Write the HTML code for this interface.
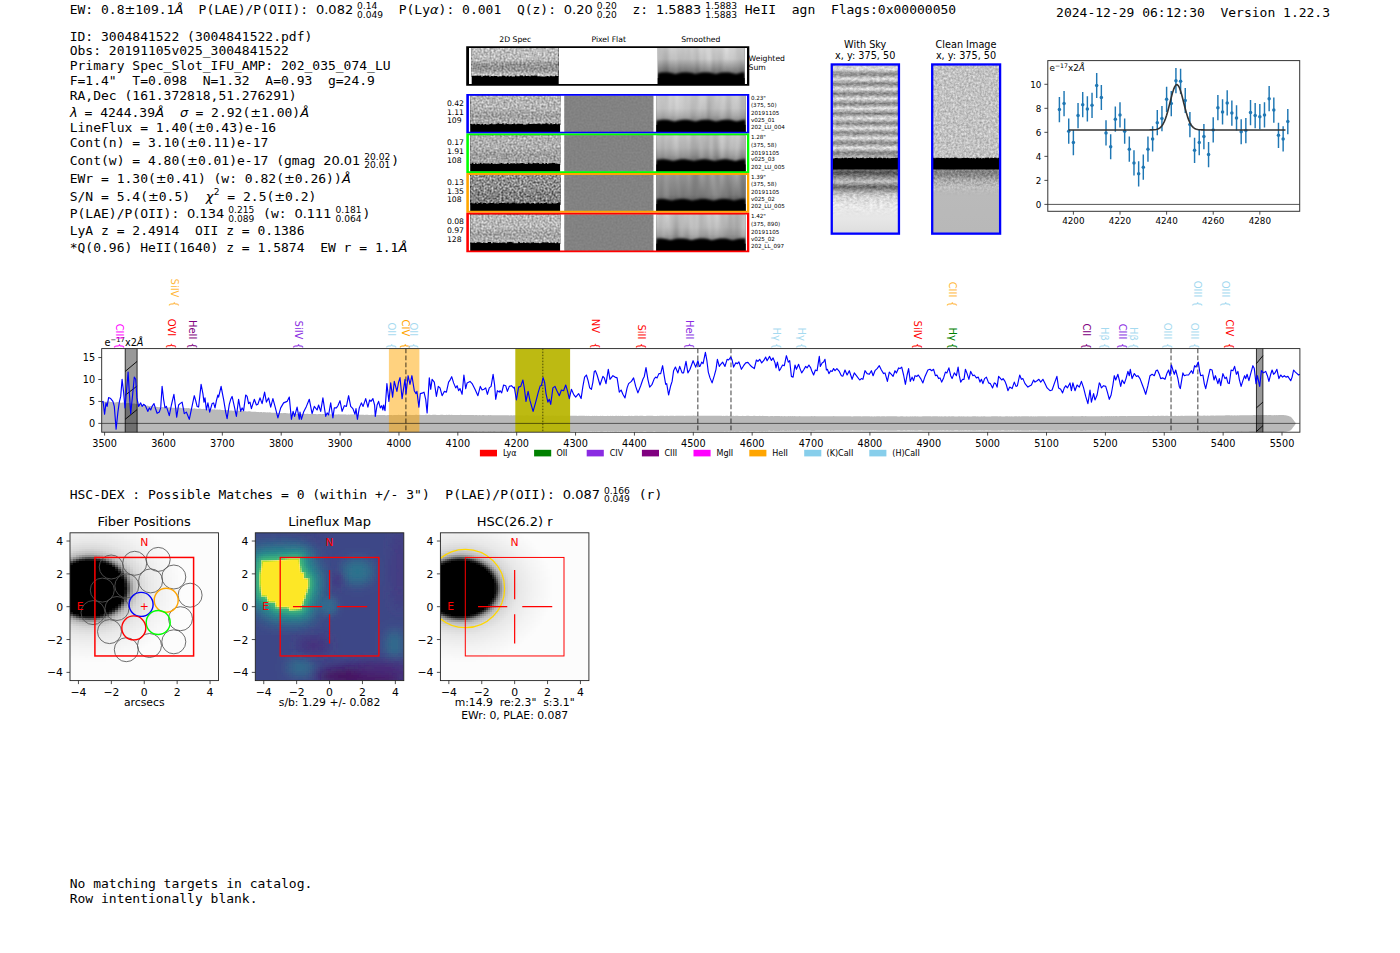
<!DOCTYPE html>
<html><head><meta charset="utf-8"><title>3004841522</title>
<style>
html,body{margin:0;padding:0;background:#fff}
svg{display:block}
text{white-space:pre}
.m{font-family:"DejaVu Sans Mono","Liberation Mono",monospace;font-size:13px}
.s{font-family:"DejaVu Sans","Liberation Sans",sans-serif}
.i{font-style:oblique}
</style></head>
<body>
<svg width="1400" height="953" viewBox="0 0 1400 953">
<text class="m" x="69.70" y="13.90">EW: 0.8</text>
<text class="s" x="124.49" y="13.90" font-size="13">±</text>
<text class="m" x="135.29" y="13.90">109.1</text>
<text class="s i" x="174.62" y="13.90" font-size="13">Å</text>
<text class="m" x="182.92" y="13.90">  P(LAE)/P(OII): </text>
<text class="s" x="315.97" y="13.90" font-size="13">0.082</text>
<text class="s" font-size="9.1" x="357.08" y="9.00">0.14</text><text class="s" font-size="9.1" x="357.08" y="17.50">0.049</text>
<text class="m" x="398.70" y="13.90">P(Ly</text>
<text class="s i" x="430.01" y="13.90" font-size="13">α</text>
<text class="m" x="438.61" y="13.90">): 0.001  Q(z): </text>
<text class="s" x="563.83" y="13.90" font-size="13">0.20</text>
<text class="s" font-size="9.1" x="596.67" y="9.00">0.20</text><text class="s" font-size="9.1" x="596.67" y="17.50">0.20</text>
<text class="m" x="632.40" y="13.90">z: </text>
<text class="s" x="655.88" y="13.90" font-size="13">1.5883</text>
<text class="s" font-size="9.1" x="705.25" y="9.00">1.5883</text><text class="s" font-size="9.1" x="705.25" y="17.50">1.5883</text>
<text class="m" x="744.80" y="13.90">HeII  agn  Flags:0x00000050</text>
<text class="m" x="1056.10" y="17.00">2024-12-29 06:12:30  Version 1.22.3</text>
<text class="m" x="69.70" y="40.80">ID: 3004841522 (3004841522.pdf)</text>
<text class="m" x="69.70" y="54.90">Obs: 20191105v025_3004841522</text>
<text class="m" x="69.70" y="69.60">Primary Spec_Slot_IFU_AMP: 202_035_074_LU</text>
<text class="m" x="69.70" y="85.10">F=1.4"  T=0.098  N=1.32  A=0.93  g=24.9</text>
<text class="m" x="69.70" y="99.90">RA,Dec (161.372818,51.276291)</text>
<text class="s i" x="70.10" y="117.10" font-size="13">λ</text>
<text class="m" x="76.70" y="117.10"> = 4244.39</text>
<text class="s i" x="155.17" y="117.10" font-size="13">Å</text>
<text class="m" x="163.47" y="117.10">  </text>
<text class="s i" x="180.00" y="117.10" font-size="13">σ</text>
<text class="m" x="187.60" y="117.10"> = 2.92(</text>
<text class="s" x="250.21" y="117.10" font-size="13">±</text>
<text class="m" x="261.01" y="117.10">1.00)</text>
<text class="s i" x="300.35" y="117.10" font-size="13">Å</text>
<text class="m" x="69.70" y="132.30">LineFlux = 1.40(</text>
<text class="s" x="194.93" y="132.30" font-size="13">±</text>
<text class="m" x="205.73" y="132.30">0.43)e-16</text>
<text class="m" x="69.70" y="147.00">Cont(n) = 3.10(</text>
<text class="s" x="187.10" y="147.00" font-size="13">±</text>
<text class="m" x="197.90" y="147.00">0.11)e-17</text>
<text class="m" x="69.70" y="164.60">Cont(w) = 4.80(</text>
<text class="s" x="187.10" y="164.60" font-size="13">±</text>
<text class="m" x="197.90" y="164.60">0.01)e-17 (gmag </text>
<text class="s" x="323.13" y="164.60" font-size="13">20.01</text>
<text class="s" font-size="9.1" x="364.23" y="159.70">20.02</text><text class="s" font-size="9.1" x="364.23" y="168.20">20.01</text>
<text class="m" x="391.28" y="164.60">)</text>
<text class="m" x="69.70" y="183.00">EWr = 1.30(</text>
<text class="s" x="155.79" y="183.00" font-size="13">±</text>
<text class="m" x="166.59" y="183.00">0.41) (w: 0.82(</text>
<text class="s" x="283.99" y="183.00" font-size="13">±</text>
<text class="m" x="294.79" y="183.00">0.26))</text>
<text class="s i" x="341.95" y="183.00" font-size="13">Å</text>
<text class="m" x="69.70" y="200.50">S/N = 5.4(</text>
<text class="s" x="147.97" y="200.50" font-size="13">±</text>
<text class="m" x="158.77" y="200.50">0.5)  </text>
<text class="s i" x="205.73" y="200.50" font-size="13">χ</text>
<text class="s" x="213.73" y="195.30" font-size="9.1">2</text>
<text class="m" x="219.51" y="200.50"> = 2.5(</text>
<text class="s" x="274.30" y="200.50" font-size="13">±</text>
<text class="m" x="285.10" y="200.50">0.2)</text>
<text class="m" x="69.70" y="218.10">P(LAE)/P(OII): </text>
<text class="s" x="187.10" y="218.10" font-size="13">0.134</text>
<text class="s" font-size="9.1" x="228.21" y="213.20">0.215</text><text class="s" font-size="9.1" x="228.21" y="221.70">0.089</text>
<text class="m" x="255.25" y="218.10"> (w: </text>
<text class="s" x="294.38" y="218.10" font-size="13">0.111</text>
<text class="s" font-size="9.1" x="335.49" y="213.20">0.181</text><text class="s" font-size="9.1" x="335.49" y="221.70">0.064</text>
<text class="m" x="362.53" y="218.10">)</text>
<text class="m" x="69.70" y="234.70">LyA z = 2.4914  OII z = 0.1386</text>
<text class="m" x="69.70" y="251.80">*Q(0.96) HeII(1640) z = 1.5874  EW r = 1.1</text>
<text class="s i" x="398.62" y="251.80" font-size="13">Å</text>
<text class="m" x="69.70" y="498.60">HSC-DEX : Possible Matches = 0 (within +/- 3")  P(LAE)/P(OII): </text>
<text class="s" x="562.78" y="498.60" font-size="13">0.087</text>
<text class="s" font-size="9.1" x="603.88" y="493.70">0.166</text><text class="s" font-size="9.1" x="603.88" y="502.20">0.049</text>
<text class="m" x="630.93" y="498.60"> (r)</text>
<text class="m" x="69.70" y="888.20">No matching targets in catalog.</text>
<text class="m" x="69.70" y="903.20">Row intentionally blank.</text>
<defs>
<filter id="nzA" x="0" y="0" width="1" height="1" color-interpolation-filters="sRGB"><feTurbulence type="fractalNoise" baseFrequency="0.5 0.5" numOctaves="2" seed="3" result="t"/><feColorMatrix in="t" type="matrix" values="1 0 0 0 0 1 0 0 0 0 1 0 0 0 0 0 0 0 0 1" result="g0"/><feGaussianBlur in="g0" stdDeviation="0.4" result="g"/><feComposite in="SourceGraphic" in2="g" operator="arithmetic" k1="0" k2="1" k3="0.62" k4="-0.310"/></filter>
<filter id="nzB" x="0" y="0" width="1" height="1" color-interpolation-filters="sRGB"><feTurbulence type="fractalNoise" baseFrequency="0.5 0.5" numOctaves="2" seed="8" result="t"/><feColorMatrix in="t" type="matrix" values="1 0 0 0 0 1 0 0 0 0 1 0 0 0 0 0 0 0 0 1" result="g0"/><feGaussianBlur in="g0" stdDeviation="0.4" result="g"/><feComposite in="SourceGraphic" in2="g" operator="arithmetic" k1="0" k2="1" k3="0.95" k4="-0.475"/></filter>
<filter id="nzC" x="0" y="0" width="1" height="1" color-interpolation-filters="sRGB"><feTurbulence type="fractalNoise" baseFrequency="0.5 0.5" numOctaves="1" seed="5" result="t"/><feColorMatrix in="t" type="matrix" values="1 0 0 0 0 1 0 0 0 0 1 0 0 0 0 0 0 0 0 1" result="g"/><feComposite in="SourceGraphic" in2="g" operator="arithmetic" k1="0" k2="1" k3="0.08" k4="-0.040"/></filter>
<filter id="nzV" x="0" y="0" width="1" height="1" color-interpolation-filters="sRGB"><feTurbulence type="fractalNoise" baseFrequency="0.1 0.012" numOctaves="2" seed="21" result="t"/><feColorMatrix in="t" type="matrix" values="1 0 0 0 0 1 0 0 0 0 1 0 0 0 0 0 0 0 0 1" result="g"/><feComposite in="SourceGraphic" in2="g" operator="arithmetic" k1="0" k2="1" k3="0.28" k4="-0.140"/></filter>
<filter id="nzS" x="0" y="0" width="1" height="1" color-interpolation-filters="sRGB"><feTurbulence type="fractalNoise" baseFrequency="0.3 0.45" numOctaves="2" seed="11" result="t"/><feColorMatrix in="t" type="matrix" values="1 0 0 0 0 1 0 0 0 0 1 0 0 0 0 0 0 0 0 1" result="g0"/><feGaussianBlur in="g0" stdDeviation="0.4" result="g"/><feComposite in="SourceGraphic" in2="g" operator="arithmetic" k1="0" k2="1" k3="0.36" k4="-0.180"/></filter>
<filter id="nzK" x="0" y="0" width="1" height="1" color-interpolation-filters="sRGB"><feTurbulence type="fractalNoise" baseFrequency="0.45 0.45" numOctaves="2" seed="17" result="t"/><feColorMatrix in="t" type="matrix" values="1 0 0 0 0 1 0 0 0 0 1 0 0 0 0 0 0 0 0 1" result="g0"/><feGaussianBlur in="g0" stdDeviation="0.4" result="g"/><feComposite in="SourceGraphic" in2="g" operator="arithmetic" k1="0" k2="1" k3="0.4" k4="-0.200"/></filter>
<filter id="blurw" x="-0.05" y="-0.5" width="1.1" height="2"><feGaussianBlur stdDeviation="1.0 1.3"/></filter>
<linearGradient id="g2d0" x1="0" y1="0" x2="0" y2="1"><stop offset="0" stop-color="#bebebe"/><stop offset="0.4" stop-color="#bababa"/><stop offset="0.58" stop-color="#929292"/><stop offset="0.78" stop-color="#969696"/><stop offset="0.92" stop-color="#c4c4c4"/><stop offset="1" stop-color="#c8c8c8"/></linearGradient>
<linearGradient id="g2d1" x1="0" y1="0" x2="0" y2="1"><stop offset="0" stop-color="#b6b6b6"/><stop offset="0.45" stop-color="#b4b4b4"/><stop offset="0.68" stop-color="#9e9e9e"/><stop offset="0.85" stop-color="#acacac"/><stop offset="1" stop-color="#b0b0b0"/></linearGradient>
<linearGradient id="g2d2" x1="0" y1="0" x2="0" y2="1"><stop offset="0" stop-color="#b0b0b0"/><stop offset="0.45" stop-color="#aeaeae"/><stop offset="0.68" stop-color="#9c9c9c"/><stop offset="0.85" stop-color="#a6a6a6"/><stop offset="1" stop-color="#a8a8a8"/></linearGradient>
<linearGradient id="g2d3" x1="0" y1="0" x2="0" y2="1"><stop offset="0" stop-color="#929292"/><stop offset="0.45" stop-color="#8e8e8e"/><stop offset="0.68" stop-color="#808080"/><stop offset="0.85" stop-color="#848484"/><stop offset="1" stop-color="#868686"/></linearGradient>
<linearGradient id="g2d4" x1="0" y1="0" x2="0" y2="1"><stop offset="0" stop-color="#bababa"/><stop offset="0.45" stop-color="#b6b6b6"/><stop offset="0.68" stop-color="#a2a2a2"/><stop offset="0.85" stop-color="#aeaeae"/><stop offset="1" stop-color="#b2b2b2"/></linearGradient>
<linearGradient id="gsm0" x1="0" y1="0" x2="0" y2="1"><stop offset="0" stop-color="#cecece"/><stop offset="0.3" stop-color="#c4c4c4"/><stop offset="0.52" stop-color="#969696"/><stop offset="0.66" stop-color="#767676"/><stop offset="0.78" stop-color="#505050"/><stop offset="1" stop-color="#3c3c3c"/></linearGradient>
<linearGradient id="gsm1" x1="0" y1="0" x2="0" y2="1"><stop offset="0" stop-color="#c4c4c4"/><stop offset="0.35" stop-color="#b8b8b8"/><stop offset="0.55" stop-color="#9e9e9e"/><stop offset="0.7" stop-color="#7d7d7d"/><stop offset="0.8" stop-color="#5a5a5a"/><stop offset="1" stop-color="#464646"/></linearGradient>
<linearGradient id="gsm2" x1="0" y1="0" x2="0" y2="1"><stop offset="0" stop-color="#bababa"/><stop offset="0.35" stop-color="#acacac"/><stop offset="0.55" stop-color="#949494"/><stop offset="0.7" stop-color="#767676"/><stop offset="0.8" stop-color="#555555"/><stop offset="1" stop-color="#464646"/></linearGradient>
<linearGradient id="gsm3" x1="0" y1="0" x2="0" y2="1"><stop offset="0" stop-color="#989898"/><stop offset="0.35" stop-color="#8a8a8a"/><stop offset="0.55" stop-color="#808080"/><stop offset="0.7" stop-color="#646464"/><stop offset="0.8" stop-color="#4b4b4b"/><stop offset="1" stop-color="#3c3c3c"/></linearGradient>
<linearGradient id="gsm4" x1="0" y1="0" x2="0" y2="1"><stop offset="0" stop-color="#c4c4c4"/><stop offset="0.35" stop-color="#b6b6b6"/><stop offset="0.55" stop-color="#a0a0a0"/><stop offset="0.7" stop-color="#808080"/><stop offset="0.8" stop-color="#5a5a5a"/><stop offset="1" stop-color="#464646"/></linearGradient>
<linearGradient id="gsky" x1="0" y1="0" x2="0" y2="1"><stop offset="0" stop-color="#c4c4c4"/><stop offset="0.045" stop-color="#e0e0e0"/><stop offset="0.0976" stop-color="#828282"/><stop offset="0.1502" stop-color="#e0e0e0"/><stop offset="0.2028" stop-color="#828282"/><stop offset="0.2554" stop-color="#e0e0e0"/><stop offset="0.308" stop-color="#828282"/><stop offset="0.3606" stop-color="#e0e0e0"/><stop offset="0.4132" stop-color="#828282"/><stop offset="0.4658" stop-color="#e0e0e0"/><stop offset="0.5184" stop-color="#828282"/><stop offset="0.571" stop-color="#e0e0e0"/><stop offset="0.6236" stop-color="#828282"/><stop offset="0.6762" stop-color="#e0e0e0"/><stop offset="0.7289" stop-color="#828282"/><stop offset="0.7815" stop-color="#e0e0e0"/><stop offset="0.8341" stop-color="#828282"/><stop offset="0.8867" stop-color="#e0e0e0"/><stop offset="0.9393" stop-color="#828282"/><stop offset="1" stop-color="#bebebe"/></linearGradient>
<linearGradient id="gsky2" x1="0" y1="0" x2="0" y2="1"><stop offset="0" stop-color="#787878"/><stop offset="0.06" stop-color="#525252"/><stop offset="0.14" stop-color="#969696"/><stop offset="0.2" stop-color="#c0c0c0"/><stop offset="0.28" stop-color="#646464"/><stop offset="0.36" stop-color="#afafaf"/><stop offset="0.45" stop-color="#d8d8d8"/><stop offset="0.6" stop-color="#e8e8e8"/><stop offset="0.8" stop-color="#e6e6e6"/><stop offset="1" stop-color="#dedede"/></linearGradient>
<linearGradient id="gcl2" x1="0" y1="0" x2="0" y2="1"><stop offset="0" stop-color="#8a8a8a"/><stop offset="0.08" stop-color="#808080"/><stop offset="0.18" stop-color="#acacac"/><stop offset="0.3" stop-color="#bebebe"/><stop offset="0.36" stop-color="#bababa"/><stop offset="1" stop-color="#b8b8b8"/></linearGradient>
<linearGradient id="gfade" x1="0" y1="0" x2="0" y2="1"><stop offset="0" stop-color="#fff"/><stop offset="0.45" stop-color="#fff"/><stop offset="0.75" stop-color="#000"/><stop offset="1" stop-color="#000"/></linearGradient>
<mask id="mfs"><rect x="832" y="169" width="67" height="64" fill="url(#gfade)"/></mask>
<linearGradient id="gfade2" x1="0" y1="0" x2="0" y2="1"><stop offset="0" stop-color="#fff"/><stop offset="0.2" stop-color="#fff"/><stop offset="0.42" stop-color="#000"/><stop offset="1" stop-color="#000"/></linearGradient>
<mask id="mfc"><rect x="933" y="169" width="67" height="64" fill="url(#gfade2)"/></mask>
</defs>
<text class="s" x="515.30" y="41.90" font-size="7.7" text-anchor="middle">2D Spec</text>
<text class="s" x="608.70" y="41.90" font-size="7.7" text-anchor="middle">Pixel Flat</text>
<text class="s" x="700.80" y="41.90" font-size="7.7" text-anchor="middle">Smoothed</text>
<rect x="471.70" y="48.00" width="87.00" height="29.00" fill="url(#g2d0)" filter="url(#nzA)"/>
<polygon points="471.7,75.85 473.3,75.85 473.3,75.71 474.9,75.71 474.9,75.65 476.5,75.65 476.5,75.47 478.1,75.47 478.1,75.71 479.7,75.71 479.7,75.49 481.3,75.49 481.3,76.57 482.9,76.57 482.9,76.04 484.5,76.04 484.5,75.47 486.1,75.47 486.1,75.82 487.7,75.82 487.7,75.52 489.3,75.52 489.3,76.46 490.9,76.46 490.9,76.04 492.5,76.04 492.5,76.30 494.1,76.30 494.1,75.95 495.7,75.95 495.7,75.91 497.3,75.91 497.3,76.58 498.9,76.58 498.9,76.34 500.5,76.34 500.5,76.26 502.1,76.26 502.1,75.50 503.7,75.50 503.7,75.68 505.3,75.68 505.3,76.41 506.9,76.41 506.9,75.64 508.5,75.64 508.5,76.43 510.1,76.43 510.1,75.86 511.7,75.86 511.7,76.45 513.3,76.45 513.3,76.60 514.9,76.60 514.9,75.55 516.5,75.55 516.5,76.35 518.1,76.35 518.1,76.34 519.7,76.34 519.7,75.42 521.3,75.42 521.3,75.55 522.9,75.55 522.9,76.25 524.5,76.25 524.5,75.45 526.1,75.45 526.1,75.95 527.7,75.95 527.7,75.79 529.3,75.79 529.3,76.35 530.9,76.35 530.9,75.47 532.5,75.47 532.5,75.77 534.1,75.77 534.1,75.44 535.7,75.44 535.7,75.53 537.3,75.53 537.3,76.24 538.9,76.24 538.9,76.17 540.5,76.17 540.5,76.40 542.1,76.40 542.1,76.43 543.7,76.43 543.7,76.52 545.3,76.52 545.3,76.24 546.9,76.24 546.9,75.88 548.5,75.88 548.5,76.60 550.1,76.60 550.1,75.79 551.7,75.79 551.7,76.19 553.3,76.19 553.3,76.23 554.9,76.23 554.9,75.62 556.5,75.62 556.5,76.02 558.1,76.02 558.1,76.22 558.7,76.22 558.7,84.20 471.7,84.20" fill="#000"/>
<rect x="657.80" y="48.00" width="86.80" height="36.20" fill="url(#gsm0)" filter="url(#nzV)"/>
<clipPath id="cst"><rect x="657.8" y="48" width="86.8" height="36.2"/></clipPath>
<g clip-path="url(#cst)"><g filter="url(#blurw)"><polygon points="657.8,73.50 659.2,73.15 660.7,72.85 662.1,72.62 663.6,72.47 665.0,72.40 666.5,72.43 667.9,72.55 669.4,72.75 670.8,73.02 672.3,73.35 673.7,73.73 675.2,74.13 676.6,73.87 678.1,73.48 679.5,73.13 680.9,72.83 682.4,72.61 683.8,72.46 685.3,72.40 686.7,72.43 688.2,72.55 689.6,72.76 691.1,73.03 692.5,73.37 694.0,73.75 695.4,74.15 696.9,73.85 698.3,73.46 699.8,73.12 701.2,72.82 702.6,72.60 704.1,72.46 705.5,72.40 707.0,72.44 708.4,72.56 709.9,72.77 711.3,73.05 712.8,73.39 714.2,73.77 715.7,74.17 717.1,73.83 718.6,73.45 720.0,73.10 721.5,72.81 722.9,72.59 724.3,72.45 725.8,72.40 727.2,72.44 728.7,72.57 730.1,72.78 731.6,73.06 733.0,73.40 734.5,73.78 735.9,74.18 737.4,73.81 738.8,73.43 740.3,73.09 741.7,72.80 743.2,72.58 744.6,72.45 744.6,88.00 657.8,88.00" fill="#000"/></g></g>
<rect x="657.80" y="78.00" width="86.80" height="6.20" fill="#000"/>
<path d="M466.20 46.20H749.30V85.80H466.20ZM469.00 48.00V84.00H747.00V48.00Z" fill="#000" fill-rule="evenodd"/>
<text class="s" x="748.60" y="60.70" font-size="7.7" text-anchor="start">Weighted</text>
<text class="s" x="748.60" y="69.70" font-size="7.7" text-anchor="start">Sum</text>
<rect x="470.20" y="95.50" width="89.90" height="29.50" fill="url(#g2d1)" filter="url(#nzA)"/>
<polygon points="470.2,124.08 471.8,124.08 471.8,124.30 473.4,124.30 473.4,123.65 475.0,123.65 475.0,124.41 476.6,124.41 476.6,123.80 478.2,123.80 478.2,124.02 479.8,124.02 479.8,124.42 481.4,124.42 481.4,123.84 483.0,123.84 483.0,124.45 484.6,124.45 484.6,123.94 486.2,123.94 486.2,124.41 487.8,124.41 487.8,124.38 489.4,124.38 489.4,123.95 491.0,123.95 491.0,123.43 492.6,123.43 492.6,124.34 494.2,124.34 494.2,124.21 495.8,124.21 495.8,123.68 497.4,123.68 497.4,123.27 499.0,123.27 499.0,123.75 500.6,123.75 500.6,123.98 502.2,123.98 502.2,123.23 503.8,123.23 503.8,124.44 505.4,124.44 505.4,123.38 507.0,123.38 507.0,124.12 508.6,124.12 508.6,124.31 510.2,124.31 510.2,124.35 511.8,124.35 511.8,124.10 513.4,124.10 513.4,123.44 515.0,123.44 515.0,124.27 516.6,124.27 516.6,123.74 518.2,123.74 518.2,123.67 519.8,123.67 519.8,124.02 521.4,124.02 521.4,123.79 523.0,123.79 523.0,124.42 524.6,124.42 524.6,124.42 526.2,124.42 526.2,124.23 527.8,124.23 527.8,123.62 529.4,123.62 529.4,123.94 531.0,123.94 531.0,124.09 532.6,124.09 532.6,123.74 534.2,123.74 534.2,123.91 535.8,123.91 535.8,124.11 537.4,124.11 537.4,123.47 539.0,123.47 539.0,123.59 540.6,123.59 540.6,124.18 542.2,124.18 542.2,123.75 543.8,123.75 543.8,123.82 545.4,123.82 545.4,123.36 547.0,123.36 547.0,123.55 548.6,123.55 548.6,124.13 550.2,124.13 550.2,123.23 551.8,123.23 551.8,124.35 553.4,124.35 553.4,123.96 555.0,123.96 555.0,123.52 556.6,123.52 556.6,124.30 558.2,124.30 558.2,123.86 559.8,123.86 559.8,124.45 560.1,124.45 560.1,132.10 470.2,132.10" fill="#000"/>
<rect x="564.30" y="95.50" width="89.10" height="36.60" fill="#828282" filter="url(#nzC)"/>
<rect x="656.30" y="95.50" width="89.30" height="36.60" fill="url(#gsm1)" filter="url(#nzV)"/>
<clipPath id="cs0"><rect x="656.3" y="95.50" width="89.3" height="36.60"/></clipPath>
<g clip-path="url(#cs0)"><g filter="url(#blurw)"><polygon points="656.3,120.80 657.8,120.45 659.3,120.15 660.8,119.92 662.3,119.77 663.7,119.70 665.2,119.73 666.7,119.85 668.2,120.05 669.7,120.32 671.2,120.65 672.7,121.03 674.2,121.43 675.6,121.17 677.1,120.78 678.6,120.43 680.1,120.13 681.6,119.91 683.1,119.76 684.6,119.70 686.1,119.73 687.6,119.85 689.0,120.06 690.5,120.33 692.0,120.67 693.5,121.05 695.0,121.45 696.5,121.15 698.0,120.76 699.5,120.42 700.9,120.12 702.4,119.90 703.9,119.76 705.4,119.70 706.9,119.74 708.4,119.86 709.9,120.07 711.4,120.35 712.9,120.69 714.3,121.07 715.8,121.47 717.3,121.13 718.8,120.75 720.3,120.40 721.8,120.11 723.3,119.89 724.8,119.75 726.3,119.70 727.7,119.74 729.2,119.87 730.7,120.08 732.2,120.36 733.7,120.70 735.2,121.08 736.7,121.48 738.2,121.11 739.6,120.73 741.1,120.39 742.6,120.10 744.1,119.88 745.6,119.75 745.6,136.10 656.3,136.10" fill="#000"/></g></g>
<rect x="656.30" y="124.90" width="89.30" height="7.20" fill="#000"/>
<path d="M466.30 93.90H749.30V133.50H466.30ZM468.90 95.75V131.65H747.00V95.75Z" fill="#0000ff" fill-rule="evenodd"/>
<text class="s" x="446.90" y="105.60" font-size="7.7" text-anchor="start">0.42</text>
<text class="s" x="446.90" y="114.50" font-size="7.7" text-anchor="start">1.11</text>
<text class="s" x="446.90" y="123.00" font-size="7.7" text-anchor="start">109</text>
<text class="s" x="750.90" y="99.50" font-size="5.6" text-anchor="start">0.23"</text>
<text class="s" x="750.90" y="107.10" font-size="5.6" text-anchor="start">(375, 50)</text>
<text class="s" x="750.90" y="115.00" font-size="5.6" text-anchor="start">20191105</text>
<text class="s" x="750.90" y="121.70" font-size="5.6" text-anchor="start">v025_01</text>
<text class="s" x="750.90" y="129.00" font-size="5.6" text-anchor="start">202_LU_004</text>
<rect x="470.20" y="135.10" width="89.90" height="29.50" fill="url(#g2d2)" filter="url(#nzA)"/>
<polygon points="470.2,163.81 471.8,163.81 471.8,162.85 473.4,162.85 473.4,163.94 475.0,163.94 475.0,163.18 476.6,163.18 476.6,163.99 478.2,163.99 478.2,163.78 479.8,163.78 479.8,162.80 481.4,162.80 481.4,163.83 483.0,163.83 483.0,163.27 484.6,163.27 484.6,163.50 486.2,163.50 486.2,163.51 487.8,163.51 487.8,163.46 489.4,163.46 489.4,163.85 491.0,163.85 491.0,163.02 492.6,163.02 492.6,163.98 494.2,163.98 494.2,163.80 495.8,163.80 495.8,164.07 497.4,164.07 497.4,163.75 499.0,163.75 499.0,163.57 500.6,163.57 500.6,162.93 502.2,162.93 502.2,163.61 503.8,163.61 503.8,163.95 505.4,163.95 505.4,163.76 507.0,163.76 507.0,162.81 508.6,162.81 508.6,164.02 510.2,164.02 510.2,163.29 511.8,163.29 511.8,163.61 513.4,163.61 513.4,163.24 515.0,163.24 515.0,163.66 516.6,163.66 516.6,163.20 518.2,163.20 518.2,163.45 519.8,163.45 519.8,163.26 521.4,163.26 521.4,162.93 523.0,162.93 523.0,163.34 524.6,163.34 524.6,163.92 526.2,163.92 526.2,164.02 527.8,164.02 527.8,162.87 529.4,162.87 529.4,163.46 531.0,163.46 531.0,163.85 532.6,163.85 532.6,162.87 534.2,162.87 534.2,163.35 535.8,163.35 535.8,163.15 537.4,163.15 537.4,162.95 539.0,162.95 539.0,163.73 540.6,163.73 540.6,163.64 542.2,163.64 542.2,162.96 543.8,162.96 543.8,163.92 545.4,163.92 545.4,163.11 547.0,163.11 547.0,163.97 548.6,163.97 548.6,163.20 550.2,163.20 550.2,163.19 551.8,163.19 551.8,162.87 553.4,162.87 553.4,163.00 555.0,163.00 555.0,163.45 556.6,163.45 556.6,163.84 558.2,163.84 558.2,163.90 559.8,163.90 559.8,163.41 560.1,163.41 560.1,171.70 470.2,171.70" fill="#000"/>
<rect x="564.30" y="135.10" width="89.10" height="36.60" fill="#828282" filter="url(#nzC)"/>
<rect x="656.30" y="135.10" width="89.30" height="36.60" fill="url(#gsm2)" filter="url(#nzV)"/>
<clipPath id="cs1"><rect x="656.3" y="135.10" width="89.3" height="36.60"/></clipPath>
<g clip-path="url(#cs1)"><g filter="url(#blurw)"><polygon points="656.3,160.08 657.8,159.78 659.3,159.54 660.8,159.38 662.3,159.30 663.7,159.32 665.2,159.43 666.7,159.62 668.2,159.89 669.7,160.21 671.2,160.59 672.7,160.98 674.2,160.81 675.6,160.42 677.1,160.07 678.6,159.76 680.1,159.53 681.6,159.37 683.1,159.30 684.6,159.32 686.1,159.44 687.6,159.63 689.0,159.90 690.5,160.23 692.0,160.60 693.5,161.00 695.0,160.79 696.5,160.41 698.0,160.05 699.5,159.75 700.9,159.52 702.4,159.37 703.9,159.30 705.4,159.33 706.9,159.44 708.4,159.64 709.9,159.91 711.4,160.25 712.9,160.62 714.3,161.02 715.8,160.78 717.3,160.39 718.8,160.04 720.3,159.74 721.8,159.51 723.3,159.36 724.8,159.30 726.3,159.33 727.7,159.45 729.2,159.65 730.7,159.93 732.2,160.26 733.7,160.64 735.2,161.04 736.7,160.76 738.2,160.37 739.6,160.02 741.1,159.73 742.6,159.50 744.1,159.36 745.6,159.30 745.6,175.70 656.3,175.70" fill="#000"/></g></g>
<rect x="656.30" y="164.50" width="89.30" height="7.20" fill="#000"/>
<path d="M466.30 133.50H749.30V173.10H466.30ZM468.90 135.35V171.25H747.00V135.35Z" fill="#00ff00" fill-rule="evenodd"/>
<text class="s" x="446.90" y="145.20" font-size="7.7" text-anchor="start">0.17</text>
<text class="s" x="446.90" y="154.10" font-size="7.7" text-anchor="start">1.91</text>
<text class="s" x="446.90" y="162.60" font-size="7.7" text-anchor="start">108</text>
<text class="s" x="750.90" y="139.10" font-size="5.6" text-anchor="start">1.28"</text>
<text class="s" x="750.90" y="146.70" font-size="5.6" text-anchor="start">(375, 58)</text>
<text class="s" x="750.90" y="154.60" font-size="5.6" text-anchor="start">20191105</text>
<text class="s" x="750.90" y="161.30" font-size="5.6" text-anchor="start">v025_03</text>
<text class="s" x="750.90" y="168.60" font-size="5.6" text-anchor="start">202_LU_005</text>
<rect x="470.20" y="174.70" width="89.90" height="29.50" fill="url(#g2d3)" filter="url(#nzB)"/>
<polygon points="470.2,203.10 471.8,203.10 471.8,203.21 473.4,203.21 473.4,203.52 475.0,203.52 475.0,202.57 476.6,202.57 476.6,203.69 478.2,203.69 478.2,203.05 479.8,203.05 479.8,202.53 481.4,202.53 481.4,203.59 483.0,203.59 483.0,202.98 484.6,202.98 484.6,202.90 486.2,202.90 486.2,203.65 487.8,203.65 487.8,203.21 489.4,203.21 489.4,202.79 491.0,202.79 491.0,203.11 492.6,203.11 492.6,202.76 494.2,202.76 494.2,203.50 495.8,203.50 495.8,203.39 497.4,203.39 497.4,203.56 499.0,203.56 499.0,203.04 500.6,203.04 500.6,202.50 502.2,202.50 502.2,202.93 503.8,202.93 503.8,202.69 505.4,202.69 505.4,203.20 507.0,203.20 507.0,202.73 508.6,202.73 508.6,203.57 510.2,203.57 510.2,203.32 511.8,203.32 511.8,202.82 513.4,202.82 513.4,202.76 515.0,202.76 515.0,203.15 516.6,203.15 516.6,203.59 518.2,203.59 518.2,203.35 519.8,203.35 519.8,203.43 521.4,203.43 521.4,203.33 523.0,203.33 523.0,202.65 524.6,202.65 524.6,203.44 526.2,203.44 526.2,202.55 527.8,202.55 527.8,202.56 529.4,202.56 529.4,203.63 531.0,203.63 531.0,203.21 532.6,203.21 532.6,203.06 534.2,203.06 534.2,203.67 535.8,203.67 535.8,203.15 537.4,203.15 537.4,202.52 539.0,202.52 539.0,203.55 540.6,203.55 540.6,202.92 542.2,202.92 542.2,203.54 543.8,203.54 543.8,202.95 545.4,202.95 545.4,202.54 547.0,202.54 547.0,203.44 548.6,203.44 548.6,203.69 550.2,203.69 550.2,203.59 551.8,203.59 551.8,203.00 553.4,203.00 553.4,203.68 555.0,203.68 555.0,203.59 556.6,203.59 556.6,203.05 558.2,203.05 558.2,202.50 559.8,202.50 559.8,203.15 560.1,203.15 560.1,211.30 470.2,211.30" fill="#000"/>
<rect x="564.30" y="174.70" width="89.10" height="36.60" fill="#828282" filter="url(#nzC)"/>
<rect x="656.30" y="174.70" width="89.30" height="36.60" fill="url(#gsm3)" filter="url(#nzV)"/>
<clipPath id="cs2"><rect x="656.3" y="174.70" width="89.3" height="36.60"/></clipPath>
<g clip-path="url(#cs2)"><g filter="url(#blurw)"><polygon points="656.3,199.41 657.8,199.16 659.3,198.99 660.8,198.91 662.3,198.92 663.7,199.01 665.2,199.19 666.7,199.45 668.2,199.77 669.7,200.14 671.2,200.54 672.7,200.46 674.2,200.07 675.6,199.71 677.1,199.40 678.6,199.15 680.1,198.99 681.6,198.91 683.1,198.92 684.6,199.02 686.1,199.20 687.6,199.47 689.0,199.79 690.5,200.16 692.0,200.56 693.5,200.44 695.0,200.05 696.5,199.69 698.0,199.38 699.5,199.14 700.9,198.98 702.4,198.90 703.9,198.92 705.4,199.03 706.9,199.22 708.4,199.48 709.9,199.81 711.4,200.18 712.9,200.58 714.3,200.42 715.8,200.03 717.3,199.67 718.8,199.37 720.3,199.13 721.8,198.97 723.3,198.90 724.8,198.92 726.3,199.03 727.7,199.23 729.2,199.49 730.7,199.82 732.2,200.20 733.7,200.59 735.2,200.40 736.7,200.01 738.2,199.66 739.6,199.36 741.1,199.12 742.6,198.97 744.1,198.90 745.6,198.93 745.6,215.30 656.3,215.30" fill="#000"/></g></g>
<rect x="656.30" y="204.10" width="89.30" height="7.20" fill="#000"/>
<path d="M466.30 173.10H749.30V212.70H466.30ZM468.90 174.95V210.85H747.00V174.95Z" fill="#ffa500" fill-rule="evenodd"/>
<text class="s" x="446.90" y="184.80" font-size="7.7" text-anchor="start">0.13</text>
<text class="s" x="446.90" y="193.70" font-size="7.7" text-anchor="start">1.35</text>
<text class="s" x="446.90" y="202.20" font-size="7.7" text-anchor="start">108</text>
<text class="s" x="750.90" y="178.70" font-size="5.6" text-anchor="start">1.39"</text>
<text class="s" x="750.90" y="186.30" font-size="5.6" text-anchor="start">(375, 58)</text>
<text class="s" x="750.90" y="194.20" font-size="5.6" text-anchor="start">20191105</text>
<text class="s" x="750.90" y="200.90" font-size="5.6" text-anchor="start">v025_02</text>
<text class="s" x="750.90" y="208.20" font-size="5.6" text-anchor="start">202_LU_005</text>
<rect x="470.20" y="214.30" width="89.90" height="29.50" fill="url(#g2d4)" filter="url(#nzA)"/>
<polygon points="470.2,242.56 471.8,242.56 471.8,242.74 473.4,242.74 473.4,242.55 475.0,242.55 475.0,243.03 476.6,243.03 476.6,242.24 478.2,242.24 478.2,242.23 479.8,242.23 479.8,242.45 481.4,242.45 481.4,243.09 483.0,243.09 483.0,242.62 484.6,242.62 484.6,242.87 486.2,242.87 486.2,242.98 487.8,242.98 487.8,242.06 489.4,242.06 489.4,242.00 491.0,242.00 491.0,243.24 492.6,243.24 492.6,242.18 494.2,242.18 494.2,242.52 495.8,242.52 495.8,242.80 497.4,242.80 497.4,242.93 499.0,242.93 499.0,242.42 500.6,242.42 500.6,242.71 502.2,242.71 502.2,242.41 503.8,242.41 503.8,242.44 505.4,242.44 505.4,243.13 507.0,243.13 507.0,242.30 508.6,242.30 508.6,242.02 510.2,242.02 510.2,242.04 511.8,242.04 511.8,242.50 513.4,242.50 513.4,243.24 515.0,243.24 515.0,243.29 516.6,243.29 516.6,243.13 518.2,243.13 518.2,242.08 519.8,242.08 519.8,242.91 521.4,242.91 521.4,242.82 523.0,242.82 523.0,242.13 524.6,242.13 524.6,242.89 526.2,242.89 526.2,242.59 527.8,242.59 527.8,242.73 529.4,242.73 529.4,243.22 531.0,243.22 531.0,242.54 532.6,242.54 532.6,242.20 534.2,242.20 534.2,243.10 535.8,243.10 535.8,243.01 537.4,243.01 537.4,242.76 539.0,242.76 539.0,243.25 540.6,243.25 540.6,242.65 542.2,242.65 542.2,242.24 543.8,242.24 543.8,242.44 545.4,242.44 545.4,242.61 547.0,242.61 547.0,242.19 548.6,242.19 548.6,243.11 550.2,243.11 550.2,242.56 551.8,242.56 551.8,242.81 553.4,242.81 553.4,242.52 555.0,242.52 555.0,243.15 556.6,243.15 556.6,242.29 558.2,242.29 558.2,243.17 559.8,243.17 559.8,243.08 560.1,243.08 560.1,250.90 470.2,250.90" fill="#000"/>
<rect x="564.30" y="214.30" width="89.10" height="36.60" fill="#828282" filter="url(#nzC)"/>
<rect x="656.30" y="214.30" width="89.30" height="36.60" fill="url(#gsm4)" filter="url(#nzV)"/>
<clipPath id="cs3"><rect x="656.3" y="214.30" width="89.3" height="36.60"/></clipPath>
<g clip-path="url(#cs3)"><g filter="url(#blurw)"><polygon points="656.3,238.79 657.8,238.61 659.3,238.51 660.8,238.51 662.3,238.60 663.7,238.77 665.2,239.02 666.7,239.34 668.2,239.70 669.7,240.09 671.2,240.10 672.7,239.71 674.2,239.34 675.6,239.03 677.1,238.78 678.6,238.60 680.1,238.51 681.6,238.51 683.1,238.60 684.6,238.78 686.1,239.03 687.6,239.35 689.0,239.72 690.5,240.11 692.0,240.08 693.5,239.69 695.0,239.33 696.5,239.01 698.0,238.77 699.5,238.59 700.9,238.51 702.4,238.51 703.9,238.61 705.4,238.79 706.9,239.05 708.4,239.37 709.9,239.73 711.4,240.13 712.9,240.07 714.3,239.67 715.8,239.31 717.3,239.00 718.8,238.76 720.3,238.59 721.8,238.51 723.3,238.52 724.8,238.62 726.3,238.80 727.7,239.06 729.2,239.38 730.7,239.75 732.2,240.15 733.7,240.05 735.2,239.66 736.7,239.30 738.2,238.99 739.6,238.75 741.1,238.58 742.6,238.51 744.1,238.52 745.6,238.62 745.6,254.90 656.3,254.90" fill="#000"/></g></g>
<rect x="656.30" y="243.70" width="89.30" height="7.20" fill="#000"/>
<path d="M466.30 212.70H749.30V252.30H466.30ZM468.90 214.55V250.45H747.00V214.55Z" fill="#ff0000" fill-rule="evenodd"/>
<text class="s" x="446.90" y="224.40" font-size="7.7" text-anchor="start">0.08</text>
<text class="s" x="446.90" y="233.30" font-size="7.7" text-anchor="start">0.97</text>
<text class="s" x="446.90" y="241.80" font-size="7.7" text-anchor="start">128</text>
<text class="s" x="750.90" y="218.30" font-size="5.6" text-anchor="start">1.42"</text>
<text class="s" x="750.90" y="225.90" font-size="5.6" text-anchor="start">(375, 890)</text>
<text class="s" x="750.90" y="233.80" font-size="5.6" text-anchor="start">20191105</text>
<text class="s" x="750.90" y="240.50" font-size="5.6" text-anchor="start">v025_02</text>
<text class="s" x="750.90" y="247.80" font-size="5.6" text-anchor="start">202_LL_097</text>
<text class="s" x="865.20" y="47.80" font-size="9.7" text-anchor="middle">With Sky</text>
<text class="s" x="865.20" y="58.80" font-size="9.7" text-anchor="middle">x, y: 375, 50</text>
<text class="s" x="966.00" y="47.80" font-size="9.7" text-anchor="middle">Clean Image</text>
<text class="s" x="966.00" y="58.80" font-size="9.7" text-anchor="middle">x, y: 375, 50</text>
<rect x="832.50" y="65.00" width="65.90" height="93.50" fill="url(#gsky)" filter="url(#nzS)"/>
<rect x="832.50" y="169.00" width="65.90" height="64.00" fill="url(#gsky2)"/>
<rect x="832.50" y="169.00" width="65.90" height="64.00" fill="url(#gsky2)" filter="url(#nzS)" mask="url(#mfs)"/>
<polygon points="832.5,158.39 833.8,158.39 833.8,158.30 835.1,158.30 835.1,158.05 836.4,158.05 836.4,157.78 837.7,157.78 837.7,158.28 839.0,158.28 839.0,158.30 840.3,158.30 840.3,158.19 841.6,158.19 841.6,157.72 842.9,157.72 842.9,158.27 844.2,158.27 844.2,157.73 845.5,157.73 845.5,157.80 846.8,157.80 846.8,158.28 848.1,158.28 848.1,157.92 849.4,157.92 849.4,158.00 850.7,158.00 850.7,158.03 852.0,158.03 852.0,157.50 853.3,157.50 853.3,158.32 854.6,158.32 854.6,158.38 855.9,158.38 855.9,157.55 857.2,157.55 857.2,158.04 858.5,158.04 858.5,158.22 859.8,158.22 859.8,158.10 861.1,158.10 861.1,158.07 862.4,158.07 862.4,157.54 863.7,157.54 863.7,158.21 865.0,158.21 865.0,158.20 866.3,158.20 866.3,157.87 867.6,157.87 867.6,157.91 868.9,157.91 868.9,157.54 870.2,157.54 870.2,157.65 871.5,157.65 871.5,158.08 872.8,158.08 872.8,158.22 874.1,158.22 874.1,157.65 875.4,157.65 875.4,157.51 876.7,157.51 876.7,158.37 878.0,158.37 878.0,157.74 879.3,157.74 879.3,157.62 880.6,157.62 880.6,157.81 881.9,157.81 881.9,158.20 883.2,158.20 883.2,157.68 884.5,157.68 884.5,157.74 885.8,157.74 885.8,158.23 887.1,158.23 887.1,157.82 888.4,157.82 888.4,158.20 889.7,158.20 889.7,158.36 891.0,158.36 891.0,158.10 892.3,158.10 892.3,158.10 893.6,158.10 893.6,158.04 894.9,158.04 894.9,157.82 896.2,157.82 896.2,157.65 897.5,157.65 897.5,157.53 898.4,157.53 898.4,169.60 832.5,169.60" fill="#000"/>
<rect x="831.75" y="64.45" width="67.2" height="169.2" fill="none" stroke="#0000ff" stroke-width="2.3"/>
<rect x="933.00" y="65.00" width="66.80" height="93.50" fill="#c2c2c2" filter="url(#nzK)"/>
<rect x="933.00" y="169.00" width="66.80" height="64.00" fill="url(#gcl2)"/>
<rect x="933.00" y="169.00" width="66.80" height="64.00" fill="url(#gcl2)" filter="url(#nzK)" mask="url(#mfc)"/>
<polygon points="933.0,157.79 934.3,157.79 934.3,158.32 935.6,158.32 935.6,157.84 936.9,157.84 936.9,157.64 938.2,157.64 938.2,157.65 939.5,157.65 939.5,157.94 940.8,157.94 940.8,157.83 942.1,157.83 942.1,158.07 943.4,158.07 943.4,157.92 944.7,157.92 944.7,158.30 946.0,158.30 946.0,157.79 947.3,157.79 947.3,157.86 948.6,157.86 948.6,158.15 949.9,158.15 949.9,158.06 951.2,158.06 951.2,157.74 952.5,157.74 952.5,158.00 953.8,158.00 953.8,157.54 955.1,157.54 955.1,157.53 956.4,157.53 956.4,157.65 957.7,157.65 957.7,158.32 959.0,158.32 959.0,158.33 960.3,158.33 960.3,158.14 961.6,158.14 961.6,158.08 962.9,158.08 962.9,157.77 964.2,157.77 964.2,157.66 965.5,157.66 965.5,157.89 966.8,157.89 966.8,157.82 968.1,157.82 968.1,157.88 969.4,157.88 969.4,158.37 970.7,158.37 970.7,157.93 972.0,157.93 972.0,158.21 973.3,158.21 973.3,158.02 974.6,158.02 974.6,158.39 975.9,158.39 975.9,157.81 977.2,157.81 977.2,157.58 978.5,157.58 978.5,158.34 979.8,158.34 979.8,157.88 981.1,157.88 981.1,158.38 982.4,158.38 982.4,158.08 983.7,158.08 983.7,158.26 985.0,158.26 985.0,157.63 986.3,157.63 986.3,157.74 987.6,157.74 987.6,157.59 988.9,157.59 988.9,158.20 990.2,158.20 990.2,157.75 991.5,157.75 991.5,157.77 992.8,157.77 992.8,157.94 994.1,157.94 994.1,157.58 995.4,157.58 995.4,157.84 996.7,157.84 996.7,158.15 998.0,158.15 998.0,157.75 999.3,157.75 999.3,157.97 999.8,157.97 999.8,169.60 933.0,169.60" fill="#000"/>
<rect x="932.2" y="64.45" width="67.9" height="169.2" fill="none" stroke="#0000ff" stroke-width="2.3"/>
<rect x="1047.8" y="60.6" width="251.90" height="150.70" fill="#fff" stroke="none"/>
<line x1="1047.8" y1="204.40" x2="1299.7" y2="204.40" stroke="#555" stroke-width="1.0"/>
<path d="M1059.40 96.91V122.13M1064.06 90.91V116.13M1068.72 118.53V143.75M1073.38 129.94V155.16M1078.04 102.92V128.14M1082.71 92.11V117.33M1087.37 96.31V121.53M1092.03 92.71V117.93M1096.69 72.89V98.11M1101.35 84.90V110.12M1106.01 120.33V145.55M1110.67 134.14V159.36M1115.33 106.52V131.74M1120.00 102.32V127.54M1124.66 118.53V143.75M1129.32 136.54V161.76M1133.98 150.36V175.58M1138.64 161.16V186.39M1143.30 154.56V179.78M1147.96 136.54V161.76M1152.62 126.34V151.56M1157.29 110.12V135.34M1161.95 105.92V131.14M1166.61 86.70V111.92M1171.27 90.91V116.13M1175.93 68.09V93.31M1180.59 68.69V93.91M1185.25 87.90V113.12M1189.91 111.92V137.14M1194.57 137.74V162.97M1199.24 129.94V155.16M1203.90 123.93V149.15M1208.56 141.95V167.17M1213.22 117.33V142.55M1217.88 95.11V120.33M1222.54 99.31V124.53M1227.20 90.31V115.53M1231.86 100.51V125.73M1236.53 105.32V130.54M1241.19 119.13V144.35M1245.85 117.93V143.15M1250.51 99.91V125.13M1255.17 102.92V128.14M1259.83 104.12V129.34M1264.49 102.32V127.54M1269.15 86.10V111.32M1273.82 97.51V122.73M1278.48 122.73V147.95M1283.14 126.34V151.56M1287.80 108.92V134.14" stroke="#1f77b4" stroke-width="1.45" fill="none"/>
<circle cx="1059.40" cy="109.52" r="1.75" fill="#1f77b4"/>
<circle cx="1064.06" cy="103.52" r="1.75" fill="#1f77b4"/>
<circle cx="1068.72" cy="131.14" r="1.75" fill="#1f77b4"/>
<circle cx="1073.38" cy="142.55" r="1.75" fill="#1f77b4"/>
<circle cx="1078.04" cy="115.53" r="1.75" fill="#1f77b4"/>
<circle cx="1082.71" cy="104.72" r="1.75" fill="#1f77b4"/>
<circle cx="1087.37" cy="108.92" r="1.75" fill="#1f77b4"/>
<circle cx="1092.03" cy="105.32" r="1.75" fill="#1f77b4"/>
<circle cx="1096.69" cy="85.50" r="1.75" fill="#1f77b4"/>
<circle cx="1101.35" cy="97.51" r="1.75" fill="#1f77b4"/>
<circle cx="1106.01" cy="132.94" r="1.75" fill="#1f77b4"/>
<circle cx="1110.67" cy="146.75" r="1.75" fill="#1f77b4"/>
<circle cx="1115.33" cy="119.13" r="1.75" fill="#1f77b4"/>
<circle cx="1120.00" cy="114.93" r="1.75" fill="#1f77b4"/>
<circle cx="1124.66" cy="131.14" r="1.75" fill="#1f77b4"/>
<circle cx="1129.32" cy="149.15" r="1.75" fill="#1f77b4"/>
<circle cx="1133.98" cy="162.97" r="1.75" fill="#1f77b4"/>
<circle cx="1138.64" cy="173.77" r="1.75" fill="#1f77b4"/>
<circle cx="1143.30" cy="167.17" r="1.75" fill="#1f77b4"/>
<circle cx="1147.96" cy="149.15" r="1.75" fill="#1f77b4"/>
<circle cx="1152.62" cy="138.95" r="1.75" fill="#1f77b4"/>
<circle cx="1157.29" cy="122.73" r="1.75" fill="#1f77b4"/>
<circle cx="1161.95" cy="118.53" r="1.75" fill="#1f77b4"/>
<circle cx="1166.61" cy="99.31" r="1.75" fill="#1f77b4"/>
<circle cx="1171.27" cy="103.52" r="1.75" fill="#1f77b4"/>
<circle cx="1175.93" cy="80.70" r="1.75" fill="#1f77b4"/>
<circle cx="1180.59" cy="81.30" r="1.75" fill="#1f77b4"/>
<circle cx="1185.25" cy="100.51" r="1.75" fill="#1f77b4"/>
<circle cx="1189.91" cy="124.53" r="1.75" fill="#1f77b4"/>
<circle cx="1194.57" cy="150.36" r="1.75" fill="#1f77b4"/>
<circle cx="1199.24" cy="142.55" r="1.75" fill="#1f77b4"/>
<circle cx="1203.90" cy="136.54" r="1.75" fill="#1f77b4"/>
<circle cx="1208.56" cy="154.56" r="1.75" fill="#1f77b4"/>
<circle cx="1213.22" cy="129.94" r="1.75" fill="#1f77b4"/>
<circle cx="1217.88" cy="107.72" r="1.75" fill="#1f77b4"/>
<circle cx="1222.54" cy="111.92" r="1.75" fill="#1f77b4"/>
<circle cx="1227.20" cy="102.92" r="1.75" fill="#1f77b4"/>
<circle cx="1231.86" cy="113.12" r="1.75" fill="#1f77b4"/>
<circle cx="1236.53" cy="117.93" r="1.75" fill="#1f77b4"/>
<circle cx="1241.19" cy="131.74" r="1.75" fill="#1f77b4"/>
<circle cx="1245.85" cy="130.54" r="1.75" fill="#1f77b4"/>
<circle cx="1250.51" cy="112.52" r="1.75" fill="#1f77b4"/>
<circle cx="1255.17" cy="115.53" r="1.75" fill="#1f77b4"/>
<circle cx="1259.83" cy="116.73" r="1.75" fill="#1f77b4"/>
<circle cx="1264.49" cy="114.93" r="1.75" fill="#1f77b4"/>
<circle cx="1269.15" cy="98.71" r="1.75" fill="#1f77b4"/>
<circle cx="1273.82" cy="110.12" r="1.75" fill="#1f77b4"/>
<circle cx="1278.48" cy="135.34" r="1.75" fill="#1f77b4"/>
<circle cx="1283.14" cy="138.95" r="1.75" fill="#1f77b4"/>
<circle cx="1287.80" cy="121.53" r="1.75" fill="#1f77b4"/>
<polyline points="1068.72,129.94 1069.89,129.94 1071.05,129.94 1072.22,129.94 1073.38,129.94 1074.55,129.94 1075.71,129.94 1076.88,129.94 1078.04,129.94 1079.21,129.94 1080.38,129.94 1081.54,129.94 1082.71,129.94 1083.87,129.94 1085.04,129.94 1086.20,129.94 1087.37,129.94 1088.53,129.94 1089.70,129.94 1090.86,129.94 1092.03,129.94 1093.19,129.94 1094.36,129.94 1095.52,129.94 1096.69,129.94 1097.85,129.94 1099.02,129.94 1100.19,129.94 1101.35,129.94 1102.52,129.94 1103.68,129.94 1104.85,129.94 1106.01,129.94 1107.18,129.94 1108.34,129.94 1109.51,129.94 1110.67,129.94 1111.84,129.94 1113.00,129.94 1114.17,129.94 1115.33,129.94 1116.50,129.94 1117.67,129.94 1118.83,129.94 1120.00,129.94 1121.16,129.94 1122.33,129.94 1123.49,129.94 1124.66,129.94 1125.82,129.94 1126.99,129.94 1128.15,129.94 1129.32,129.94 1130.48,129.94 1131.65,129.94 1132.81,129.94 1133.98,129.94 1135.14,129.94 1136.31,129.94 1137.48,129.94 1138.64,129.94 1139.81,129.94 1140.97,129.94 1142.14,129.94 1143.30,129.94 1144.47,129.94 1145.63,129.94 1146.80,129.94 1147.96,129.93 1149.13,129.93 1150.29,129.92 1151.46,129.89 1152.62,129.86 1153.79,129.79 1154.95,129.68 1156.12,129.50 1157.29,129.21 1158.45,128.76 1159.62,128.09 1160.78,127.13 1161.95,125.80 1163.11,124.00 1164.28,121.67 1165.44,118.77 1166.61,115.28 1167.77,111.25 1168.94,106.80 1170.10,102.12 1171.27,97.46 1172.43,93.12 1173.60,89.40 1174.76,86.60 1175.93,84.94 1177.10,84.57 1178.26,85.52 1179.43,87.70 1180.59,90.94 1181.76,94.97 1182.92,99.49 1184.09,104.19 1185.25,108.80 1186.42,113.08 1187.58,116.88 1188.75,120.12 1189.91,122.77 1191.08,124.85 1192.24,126.44 1193.41,127.60 1194.57,128.42 1195.74,128.98 1196.91,129.35 1198.07,129.59 1199.24,129.74 1200.40,129.82 1201.57,129.88 1202.73,129.91 1203.90,129.92 1205.06,129.93 1206.23,129.93 1207.39,129.94 1208.56,129.94 1209.72,129.94 1210.89,129.94 1212.05,129.94 1213.22,129.94 1214.38,129.94 1215.55,129.94 1216.72,129.94 1217.88,129.94 1219.05,129.94 1220.21,129.94 1221.38,129.94 1222.54,129.94 1223.71,129.94 1224.87,129.94 1226.04,129.94 1227.20,129.94 1228.37,129.94 1229.53,129.94 1230.70,129.94 1231.86,129.94 1233.03,129.94 1234.20,129.94 1235.36,129.94 1236.53,129.94 1237.69,129.94 1238.86,129.94 1240.02,129.94 1241.19,129.94 1242.35,129.94 1243.52,129.94 1244.68,129.94 1245.85,129.94 1247.01,129.94 1248.18,129.94 1249.34,129.94 1250.51,129.94 1251.67,129.94 1252.84,129.94 1254.01,129.94 1255.17,129.94 1256.34,129.94 1257.50,129.94 1258.67,129.94 1259.83,129.94 1261.00,129.94 1262.16,129.94 1263.33,129.94 1264.49,129.94 1265.66,129.94 1266.82,129.94 1267.99,129.94 1269.15,129.94 1270.32,129.94 1271.48,129.94 1272.65,129.94 1273.82,129.94 1274.98,129.94 1276.15,129.94 1277.31,129.94 1278.48,129.94 1279.64,129.94 1280.81,129.94 1281.97,129.94 1283.14,129.94 1284.30,129.94 1285.47,129.94" fill="none" stroke="#333" stroke-width="1.6" stroke-linejoin="round"/>
<rect x="1047.8" y="60.6" width="251.90" height="150.70" fill="none" stroke="#333" stroke-width="1.0"/>
<text class="s" x="1073.38" y="223.90" font-size="8.8" text-anchor="middle">4200</text>
<text class="s" x="1120.00" y="223.90" font-size="8.8" text-anchor="middle">4220</text>
<text class="s" x="1166.61" y="223.90" font-size="8.8" text-anchor="middle">4240</text>
<text class="s" x="1213.22" y="223.90" font-size="8.8" text-anchor="middle">4260</text>
<text class="s" x="1259.83" y="223.90" font-size="8.8" text-anchor="middle">4280</text>
<text class="s" x="1041.40" y="207.70" font-size="8.8" text-anchor="end">0</text>
<text class="s" x="1041.40" y="183.68" font-size="8.8" text-anchor="end">2</text>
<text class="s" x="1041.40" y="159.66" font-size="8.8" text-anchor="end">4</text>
<text class="s" x="1041.40" y="135.64" font-size="8.8" text-anchor="end">6</text>
<text class="s" x="1041.40" y="111.62" font-size="8.8" text-anchor="end">8</text>
<text class="s" x="1041.40" y="87.60" font-size="8.8" text-anchor="end">10</text>
<path d="M1073.38 211.3v3.4M1120.00 211.3v3.4M1166.61 211.3v3.4M1213.22 211.3v3.4M1259.83 211.3v3.4M1047.8 204.40h-3.4M1047.8 180.38h-3.4M1047.8 156.36h-3.4M1047.8 132.34h-3.4M1047.8 108.32h-3.4M1047.8 84.30h-3.4" stroke="#222" stroke-width="0.8" fill="none"/>
<text class="s" x="1049.5" y="71.2" font-size="8.8">e<tspan font-size="6.2" dy="-3.4">−17</tspan><tspan dy="3.4">x2</tspan><tspan class="i">Å</tspan></text>
<clipPath id="cspec"><rect x="101.7" y="348.6" width="1198.20" height="83.60"/></clipPath>
<g clip-path="url(#cspec)">
<polygon points="101.7,401.44 102.7,401.61 103.7,401.45 104.7,401.71 105.7,401.84 106.7,401.65 107.7,401.33 108.7,401.49 109.7,401.59 110.7,402.07 111.7,401.90 112.7,402.17 113.7,402.31 114.7,402.43 115.7,402.42 116.7,401.96 117.7,402.11 118.7,402.19 119.7,402.27 120.7,402.78 121.7,402.76 122.7,402.60 123.7,402.60 124.7,402.58 125.7,402.63 126.7,403.27 127.7,402.97 128.7,402.99 129.7,403.18 130.7,403.53 131.7,403.46 132.7,403.86 133.7,403.42 134.7,403.61 135.7,403.96 136.7,404.27 137.7,404.00 138.7,404.36 139.7,404.29 140.7,404.46 141.7,404.82 142.7,405.02 143.7,405.04 144.7,405.28 145.7,405.59 146.7,405.64 147.7,405.46 148.7,406.07 149.7,406.21 150.7,405.99 151.7,406.34 152.7,406.32 153.7,406.50 154.7,406.71 155.7,406.47 156.7,407.07 157.7,407.02 158.7,407.18 159.7,406.98 160.7,407.22 161.7,407.22 162.7,407.04 163.7,407.32 164.7,407.23 165.7,407.08 166.7,407.57 167.7,407.64 168.7,407.58 169.7,407.33 170.7,407.45 171.7,407.71 172.7,407.70 173.7,407.82 174.7,407.71 175.7,407.98 176.7,407.66 177.7,407.60 178.7,407.61 179.7,407.77 180.7,407.69 181.7,408.24 182.7,408.14 183.7,407.82 184.7,407.96 185.7,408.20 186.7,407.96 187.7,408.17 188.7,408.11 189.7,408.43 190.7,408.53 191.7,408.44 192.7,408.64 193.7,408.55 194.7,408.29 195.7,408.66 196.7,408.87 197.7,408.90 198.7,408.87 199.7,408.60 200.7,408.86 201.7,408.94 202.7,409.08 203.7,408.67 204.7,409.00 205.7,409.15 206.7,409.26 207.7,409.31 208.7,409.29 209.7,409.08 210.7,409.39 211.7,409.48 212.7,409.30 213.7,409.46 214.7,409.15 215.7,409.64 216.7,409.50 217.7,409.45 218.7,409.68 219.7,409.47 220.7,409.77 221.7,409.95 222.7,409.93 223.7,410.16 224.7,410.04 225.7,410.19 226.7,409.95 227.7,410.04 228.7,410.25 229.7,410.53 230.7,410.49 231.7,410.55 232.7,410.63 233.7,410.68 234.7,410.45 235.7,410.84 236.7,410.94 237.7,410.62 238.7,410.84 239.7,410.71 240.7,411.03 241.7,410.88 242.7,411.04 243.7,411.05 244.7,411.13 245.7,411.30 246.7,411.53 247.7,411.54 248.7,411.32 249.7,411.37 250.7,411.42 251.7,411.73 252.7,411.66 253.7,411.66 254.7,411.79 255.7,411.78 256.7,411.96 257.7,411.95 258.7,411.98 259.7,412.19 260.7,411.97 261.7,412.00 262.7,412.39 263.7,412.08 264.7,412.13 265.7,412.28 266.7,412.57 267.7,412.28 268.7,412.62 269.7,412.34 270.7,412.50 271.7,412.77 272.7,412.77 273.7,412.63 274.7,412.70 275.7,412.68 276.7,412.65 277.7,412.96 278.7,413.08 279.7,412.78 280.7,413.15 281.7,412.88 282.7,413.20 283.7,412.99 284.7,413.04 285.7,413.05 286.7,413.21 287.7,413.14 288.7,413.42 289.7,413.29 290.7,413.45 291.7,413.30 292.7,413.38 293.7,413.53 294.7,413.55 295.7,413.77 296.7,413.80 297.7,413.66 298.7,413.73 299.7,413.63 300.7,413.73 301.7,413.91 302.7,413.85 303.7,413.73 304.7,413.83 305.7,414.02 306.7,413.76 307.7,413.78 308.7,414.05 309.7,413.91 310.7,413.98 311.7,413.87 312.7,414.04 313.7,414.08 314.7,414.02 315.7,413.88 316.7,414.18 317.7,414.19 318.7,414.04 319.7,413.97 320.7,414.11 321.7,414.15 322.7,414.03 323.7,414.08 324.7,414.32 325.7,414.08 326.7,414.32 327.7,414.30 328.7,414.15 329.7,414.30 330.7,414.19 331.7,414.41 332.7,414.20 333.7,414.44 334.7,414.47 335.7,414.38 336.7,414.44 337.7,414.40 338.7,414.30 339.7,414.38 340.7,414.61 341.7,414.54 342.7,414.48 343.7,414.52 344.7,414.46 345.7,414.55 346.7,414.69 347.7,414.66 348.7,414.49 349.7,414.66 350.7,414.55 351.7,414.49 352.7,414.62 353.7,414.61 354.7,414.65 355.7,414.75 356.7,414.58 357.7,414.73 358.7,414.60 359.7,414.80 360.7,414.64 361.7,414.68 362.7,414.75 363.7,414.81 364.7,414.91 365.7,414.74 366.7,414.87 367.7,414.79 368.7,414.96 369.7,414.99 370.7,414.99 371.7,414.80 372.7,415.00 373.7,414.80 374.7,414.97 375.7,414.92 376.7,415.00 377.7,414.93 378.7,415.10 379.7,415.02 380.7,414.88 381.7,415.11 382.7,414.98 383.7,415.09 384.7,415.11 385.7,415.20 386.7,415.19 387.7,414.92 388.7,414.95 389.7,414.95 390.7,414.95 391.7,414.90 392.7,415.13 393.7,415.00 394.7,415.02 395.7,414.99 396.7,414.88 397.7,414.93 398.7,414.87 399.7,415.11 400.7,414.95 401.7,414.94 402.7,414.92 403.7,414.95 404.7,414.88 405.7,415.03 406.7,414.85 407.7,415.00 408.7,414.94 409.7,414.84 410.7,414.90 411.7,415.01 412.7,415.03 413.7,415.00 414.7,414.90 415.7,414.79 416.7,414.81 417.7,414.96 418.7,414.95 419.7,414.83 420.7,414.98 421.7,414.94 422.7,415.05 423.7,415.00 424.7,414.89 425.7,414.84 426.7,414.86 427.7,414.93 428.7,414.75 429.7,414.84 430.7,414.98 431.7,415.00 432.7,414.73 433.7,414.72 434.7,414.74 435.7,414.83 436.7,414.91 437.7,414.97 438.7,414.92 439.7,414.92 440.7,414.72 441.7,414.73 442.7,414.78 443.7,414.97 444.7,414.95 445.7,414.94 446.7,414.76 447.7,415.00 448.7,414.82 449.7,414.86 450.7,414.90 451.7,414.79 452.7,415.00 453.7,414.93 454.7,415.05 455.7,415.07 456.7,415.10 457.7,415.02 458.7,415.09 459.7,415.11 460.7,414.85 461.7,415.06 462.7,414.89 463.7,414.95 464.7,414.95 465.7,414.98 466.7,414.90 467.7,414.93 468.7,414.99 469.7,415.04 470.7,415.01 471.7,415.01 472.7,415.06 473.7,415.09 474.7,415.19 475.7,415.00 476.7,415.11 477.7,415.24 478.7,415.22 479.7,415.02 480.7,415.21 481.7,415.18 482.7,415.10 483.7,415.05 484.7,415.22 485.7,415.21 486.7,415.20 487.7,415.32 488.7,415.09 489.7,415.34 490.7,415.08 491.7,415.32 492.7,415.32 493.7,415.13 494.7,415.15 495.7,415.32 496.7,415.24 497.7,415.27 498.7,415.21 499.7,415.37 500.7,415.19 501.7,415.15 502.7,415.24 503.7,415.18 504.7,415.19 505.7,415.35 506.7,415.22 507.7,415.23 508.7,415.31 509.7,415.45 510.7,415.32 511.7,415.24 512.7,415.42 513.7,415.33 514.7,415.26 515.7,415.35 516.7,415.52 517.7,415.36 518.7,415.47 519.7,415.31 520.7,415.37 521.7,415.48 522.7,415.32 523.7,415.40 524.7,415.49 525.7,415.35 526.7,415.35 527.7,415.35 528.7,415.36 529.7,415.43 530.7,415.43 531.7,415.46 532.7,415.49 533.7,415.37 534.7,415.55 535.7,415.63 536.7,415.46 537.7,415.53 538.7,415.52 539.7,415.51 540.7,415.62 541.7,415.64 542.7,415.68 543.7,415.49 544.7,415.46 545.7,415.53 546.7,415.69 547.7,415.46 548.7,415.51 549.7,415.60 550.7,415.75 551.7,415.53 552.7,415.59 553.7,415.60 554.7,415.77 555.7,415.58 556.7,415.78 557.7,415.66 558.7,415.76 559.7,415.71 560.7,415.57 561.7,415.62 562.7,415.61 563.7,415.75 564.7,415.73 565.7,415.68 566.7,415.84 567.7,415.75 568.7,415.60 569.7,415.67 570.7,415.65 571.7,415.80 572.7,415.71 573.7,415.69 574.7,415.72 575.7,415.79 576.7,415.87 577.7,415.92 578.7,415.69 579.7,415.69 580.7,415.87 581.7,415.75 582.7,415.85 583.7,415.80 584.7,415.75 585.7,415.89 586.7,415.82 587.7,415.92 588.7,415.86 589.7,415.99 590.7,415.94 591.7,415.94 592.7,415.78 593.7,415.99 594.7,415.83 595.7,416.02 596.7,415.79 597.7,416.01 598.7,416.04 599.7,416.01 600.7,415.82 601.7,415.89 602.7,415.83 603.7,415.93 604.7,416.03 605.7,415.97 606.7,415.93 607.7,415.79 608.7,416.01 609.7,415.98 610.7,415.82 611.7,416.01 612.7,415.79 613.7,415.96 614.7,415.89 615.7,415.86 616.7,415.79 617.7,416.01 618.7,415.80 619.7,415.98 620.7,415.83 621.7,416.01 622.7,415.82 623.7,415.97 624.7,415.96 625.7,416.00 626.7,415.92 627.7,415.92 628.7,415.75 629.7,415.84 630.7,415.91 631.7,415.74 632.7,415.95 633.7,415.94 634.7,415.74 635.7,415.74 636.7,415.81 637.7,415.73 638.7,415.97 639.7,415.74 640.7,415.79 641.7,415.80 642.7,415.75 643.7,415.95 644.7,415.92 645.7,415.93 646.7,415.84 647.7,415.82 648.7,415.82 649.7,415.86 650.7,415.76 651.7,415.73 652.7,415.75 653.7,415.94 654.7,415.91 655.7,415.89 656.7,415.88 657.7,415.79 658.7,415.89 659.7,415.77 660.7,415.85 661.7,415.84 662.7,415.74 663.7,415.68 664.7,415.88 665.7,415.83 666.7,415.66 667.7,415.86 668.7,415.91 669.7,415.87 670.7,415.70 671.7,415.72 672.7,415.66 673.7,415.78 674.7,415.90 675.7,415.82 676.7,415.71 677.7,415.80 678.7,415.86 679.7,415.80 680.7,415.77 681.7,415.80 682.7,415.77 683.7,415.85 684.7,415.88 685.7,415.67 686.7,415.68 687.7,415.77 688.7,415.85 689.7,415.79 690.7,415.72 691.7,415.63 692.7,415.74 693.7,415.60 694.7,415.72 695.7,415.81 696.7,415.69 697.7,415.70 698.7,415.69 699.7,415.66 700.7,415.85 701.7,415.74 702.7,415.65 703.7,415.83 704.7,415.86 705.7,415.83 706.7,415.80 707.7,415.77 708.7,415.81 709.7,415.72 710.7,415.85 711.7,415.81 712.7,415.73 713.7,415.77 714.7,415.66 715.7,415.67 716.7,415.86 717.7,415.84 718.7,415.79 719.7,415.79 720.7,415.84 721.7,415.72 722.7,415.90 723.7,415.83 724.7,415.93 725.7,415.73 726.7,415.81 727.7,415.71 728.7,415.94 729.7,415.79 730.7,415.83 731.7,415.98 732.7,415.78 733.7,415.77 734.7,415.98 735.7,415.76 736.7,415.80 737.7,415.86 738.7,415.88 739.7,415.95 740.7,416.01 741.7,415.91 742.7,415.81 743.7,415.99 744.7,415.92 745.7,415.98 746.7,415.87 747.7,415.81 748.7,415.83 749.7,415.99 750.7,415.96 751.7,416.07 752.7,415.94 753.7,415.86 754.7,415.87 755.7,416.07 756.7,415.98 757.7,416.08 758.7,415.99 759.7,415.87 760.7,416.04 761.7,415.90 762.7,415.87 763.7,415.91 764.7,416.08 765.7,415.90 766.7,415.90 767.7,415.89 768.7,416.15 769.7,416.15 770.7,416.08 771.7,416.03 772.7,416.06 773.7,416.15 774.7,416.01 775.7,416.01 776.7,416.02 777.7,416.06 778.7,416.05 779.7,416.02 780.7,416.18 781.7,416.09 782.7,416.17 783.7,416.19 784.7,416.02 785.7,416.14 786.7,416.14 787.7,416.16 788.7,416.08 789.7,416.21 790.7,416.08 791.7,416.23 792.7,416.01 793.7,416.22 794.7,416.07 795.7,416.13 796.7,416.16 797.7,416.20 798.7,416.19 799.7,416.09 800.7,416.15 801.7,416.15 802.7,416.23 803.7,416.13 804.7,416.25 805.7,416.17 806.7,416.13 807.7,416.16 808.7,416.16 809.7,416.16 810.7,416.26 811.7,416.07 812.7,416.14 813.7,416.13 814.7,416.07 815.7,416.20 816.7,416.24 817.7,416.24 818.7,416.24 819.7,416.25 820.7,416.25 821.7,416.28 822.7,416.21 823.7,416.26 824.7,416.24 825.7,416.17 826.7,416.26 827.7,416.13 828.7,416.14 829.7,416.26 830.7,416.14 831.7,416.31 832.7,416.33 833.7,416.11 834.7,416.35 835.7,416.36 836.7,416.15 837.7,416.36 838.7,416.20 839.7,416.23 840.7,416.32 841.7,416.31 842.7,416.13 843.7,416.28 844.7,416.32 845.7,416.27 846.7,416.20 847.7,416.31 848.7,416.37 849.7,416.19 850.7,416.37 851.7,416.38 852.7,416.40 853.7,416.15 854.7,416.29 855.7,416.22 856.7,416.27 857.7,416.16 858.7,416.32 859.7,416.33 860.7,416.24 861.7,416.42 862.7,416.33 863.7,416.23 864.7,416.28 865.7,416.30 866.7,416.19 867.7,416.32 868.7,416.25 869.7,416.34 870.7,416.41 871.7,416.34 872.7,416.39 873.7,416.44 874.7,416.37 875.7,416.42 876.7,416.34 877.7,416.27 878.7,416.27 879.7,416.24 880.7,416.38 881.7,416.29 882.7,416.24 883.7,416.37 884.7,416.24 885.7,416.44 886.7,416.24 887.7,416.25 888.7,416.23 889.7,416.27 890.7,416.30 891.7,416.37 892.7,416.31 893.7,416.27 894.7,416.35 895.7,416.34 896.7,416.26 897.7,416.42 898.7,416.41 899.7,416.49 900.7,416.28 901.7,416.34 902.7,416.33 903.7,416.44 904.7,416.45 905.7,416.38 906.7,416.28 907.7,416.41 908.7,416.40 909.7,416.40 910.7,416.29 911.7,416.47 912.7,416.29 913.7,416.50 914.7,416.33 915.7,416.31 916.7,416.38 917.7,416.32 918.7,416.43 919.7,416.46 920.7,416.41 921.7,416.43 922.7,416.32 923.7,416.36 924.7,416.34 925.7,416.26 926.7,416.31 927.7,416.30 928.7,416.26 929.7,416.27 930.7,416.32 931.7,416.41 932.7,416.37 933.7,416.31 934.7,416.31 935.7,416.28 936.7,416.32 937.7,416.33 938.7,416.44 939.7,416.35 940.7,416.45 941.7,416.34 942.7,416.46 943.7,416.49 944.7,416.26 945.7,416.29 946.7,416.42 947.7,416.49 948.7,416.30 949.7,416.31 950.7,416.46 951.7,416.30 952.7,416.29 953.7,416.36 954.7,416.43 955.7,416.49 956.7,416.48 957.7,416.39 958.7,416.32 959.7,416.34 960.7,416.44 961.7,416.30 962.7,416.48 963.7,416.35 964.7,416.46 965.7,416.50 966.7,416.45 967.7,416.30 968.7,416.44 969.7,416.50 970.7,416.38 971.7,416.41 972.7,416.36 973.7,416.36 974.7,416.32 975.7,416.27 976.7,416.42 977.7,416.34 978.7,416.47 979.7,416.44 980.7,416.48 981.7,416.29 982.7,416.42 983.7,416.32 984.7,416.28 985.7,416.40 986.7,416.45 987.7,416.44 988.7,416.38 989.7,416.40 990.7,416.48 991.7,416.29 992.7,416.34 993.7,416.28 994.7,416.29 995.7,416.32 996.7,416.30 997.7,416.33 998.7,416.39 999.7,416.30 1000.7,416.27 1001.7,416.47 1002.7,416.46 1003.7,416.45 1004.7,416.38 1005.7,416.27 1006.7,416.35 1007.7,416.27 1008.7,416.39 1009.7,416.34 1010.7,416.41 1011.7,416.32 1012.7,416.40 1013.7,416.47 1014.7,416.37 1015.7,416.33 1016.7,416.25 1017.7,416.39 1018.7,416.23 1019.7,416.26 1020.7,416.42 1021.7,416.26 1022.7,416.22 1023.7,416.21 1024.7,416.27 1025.7,416.35 1026.7,416.31 1027.7,416.28 1028.7,416.28 1029.7,416.39 1030.7,416.21 1031.7,416.30 1032.7,416.41 1033.7,416.35 1034.7,416.40 1035.7,416.31 1036.7,416.40 1037.7,416.29 1038.7,416.35 1039.7,416.21 1040.7,416.22 1041.7,416.36 1042.7,416.20 1043.7,416.26 1044.7,416.34 1045.7,416.17 1046.7,416.40 1047.7,416.30 1048.7,416.24 1049.7,416.35 1050.7,416.27 1051.7,416.17 1052.7,416.30 1053.7,416.21 1054.7,416.33 1055.7,416.13 1056.7,416.14 1057.7,416.33 1058.7,416.18 1059.7,416.29 1060.7,416.36 1061.7,416.31 1062.7,416.18 1063.7,416.24 1064.7,416.23 1065.7,416.33 1066.7,416.31 1067.7,416.26 1068.7,416.22 1069.7,416.14 1070.7,416.23 1071.7,416.26 1072.7,416.11 1073.7,416.17 1074.7,416.15 1075.7,416.13 1076.7,416.21 1077.7,416.27 1078.7,416.30 1079.7,416.16 1080.7,416.14 1081.7,416.10 1082.7,416.09 1083.7,416.19 1084.7,416.19 1085.7,416.07 1086.7,416.29 1087.7,416.22 1088.7,416.17 1089.7,416.15 1090.7,416.15 1091.7,416.26 1092.7,416.17 1093.7,416.25 1094.7,416.20 1095.7,416.25 1096.7,416.21 1097.7,416.13 1098.7,416.18 1099.7,416.24 1100.7,416.16 1101.7,416.11 1102.7,416.20 1103.7,416.20 1104.7,416.15 1105.7,416.08 1106.7,416.25 1107.7,416.08 1108.7,416.23 1109.7,416.01 1110.7,416.19 1111.7,416.02 1112.7,416.22 1113.7,416.10 1114.7,416.15 1115.7,416.02 1116.7,416.01 1117.7,416.17 1118.7,416.19 1119.7,416.01 1120.7,416.09 1121.7,416.09 1122.7,416.10 1123.7,416.09 1124.7,416.03 1125.7,416.07 1126.7,416.13 1127.7,416.04 1128.7,415.90 1129.7,415.96 1130.7,415.97 1131.7,415.91 1132.7,416.03 1133.7,416.04 1134.7,415.93 1135.7,416.10 1136.7,415.93 1137.7,416.08 1138.7,415.95 1139.7,415.98 1140.7,415.91 1141.7,416.09 1142.7,415.92 1143.7,415.88 1144.7,416.08 1145.7,415.91 1146.7,416.01 1147.7,415.88 1148.7,415.82 1149.7,416.07 1150.7,415.96 1151.7,415.93 1152.7,415.80 1153.7,415.81 1154.7,416.04 1155.7,416.01 1156.7,415.93 1157.7,415.82 1158.7,415.82 1159.7,415.88 1160.7,415.78 1161.7,415.80 1162.7,415.78 1163.7,415.84 1164.7,415.94 1165.7,415.81 1166.7,415.81 1167.7,415.75 1168.7,415.94 1169.7,415.98 1170.7,415.89 1171.7,415.91 1172.7,415.87 1173.7,415.95 1174.7,415.80 1175.7,415.84 1176.7,415.88 1177.7,415.92 1178.7,415.79 1179.7,415.91 1180.7,415.71 1181.7,415.86 1182.7,415.69 1183.7,415.89 1184.7,415.81 1185.7,415.71 1186.7,415.77 1187.7,415.79 1188.7,415.67 1189.7,415.85 1190.7,415.66 1191.7,415.75 1192.7,415.81 1193.7,415.79 1194.7,415.80 1195.7,415.70 1196.7,415.75 1197.7,415.72 1198.7,415.68 1199.7,415.62 1200.7,415.66 1201.7,415.75 1202.7,415.64 1203.7,415.62 1204.7,415.56 1205.7,415.69 1206.7,415.64 1207.7,415.56 1208.7,415.67 1209.7,415.66 1210.7,415.57 1211.7,415.62 1212.7,415.48 1213.7,415.61 1214.7,415.63 1215.7,415.51 1216.7,415.51 1217.7,415.39 1218.7,415.39 1219.7,415.52 1220.7,415.50 1221.7,415.44 1222.7,415.47 1223.7,415.43 1224.7,415.47 1225.7,415.34 1226.7,415.31 1227.7,415.33 1228.7,415.33 1229.7,415.28 1230.7,415.45 1231.7,415.25 1232.7,415.44 1233.7,415.46 1234.7,415.34 1235.7,415.42 1236.7,415.38 1237.7,415.27 1238.7,415.39 1239.7,415.31 1240.7,415.31 1241.7,415.13 1242.7,415.37 1243.7,415.24 1244.7,415.24 1245.7,415.31 1246.7,415.25 1247.7,415.23 1248.7,415.22 1249.7,415.16 1250.7,415.14 1251.7,415.16 1252.7,415.16 1253.7,415.10 1254.7,415.12 1255.7,415.21 1256.7,415.05 1257.7,415.11 1258.7,414.97 1259.7,415.17 1260.7,415.05 1261.7,415.12 1262.7,415.02 1263.7,414.97 1264.7,415.02 1265.7,415.04 1266.7,414.93 1267.7,415.14 1268.7,414.91 1269.7,415.08 1270.7,415.02 1271.7,415.17 1272.7,415.20 1273.7,415.16 1274.7,415.05 1275.7,415.13 1276.7,414.97 1277.7,415.16 1278.7,415.01 1279.7,414.94 1280.7,415.00 1281.7,414.94 1282.7,414.96 1283.7,414.95 1284.7,415.19 1285.7,415.26 1286.7,415.61 1287.7,415.87 1288.7,416.08 1289.7,416.38 1290.7,416.80 1291.7,417.80 1292.7,419.12 1293.7,420.35 1294.7,421.67 1295.7,423.01 1295.7,423.80 1294.7,425.18 1293.7,426.55 1292.7,427.81 1291.7,429.17 1290.7,430.20 1289.7,430.63 1288.7,430.94 1287.7,431.16 1286.7,431.42 1285.7,431.78 1284.7,431.85 1283.7,432.10 1282.7,432.09 1281.7,432.12 1280.7,432.05 1279.7,432.11 1278.7,432.04 1277.7,431.89 1276.7,432.08 1275.7,431.91 1274.7,432.00 1273.7,431.89 1272.7,431.85 1271.7,431.88 1270.7,432.03 1269.7,431.97 1268.7,432.14 1267.7,431.91 1266.7,432.12 1265.7,432.01 1264.7,432.04 1263.7,432.09 1262.7,432.03 1261.7,431.93 1260.7,432.01 1259.7,431.88 1258.7,432.08 1257.7,431.94 1256.7,432.00 1255.7,431.83 1254.7,431.93 1253.7,431.95 1252.7,431.89 1251.7,431.89 1250.7,431.90 1249.7,431.89 1248.7,431.82 1247.7,431.81 1246.7,431.80 1245.7,431.73 1244.7,431.81 1243.7,431.81 1242.7,431.67 1241.7,431.91 1240.7,431.73 1239.7,431.73 1238.7,431.65 1237.7,431.77 1236.7,431.66 1235.7,431.62 1234.7,431.70 1233.7,431.58 1232.7,431.60 1231.7,431.80 1230.7,431.59 1229.7,431.76 1228.7,431.71 1227.7,431.71 1226.7,431.73 1225.7,431.71 1224.7,431.56 1223.7,431.61 1222.7,431.57 1221.7,431.60 1220.7,431.53 1219.7,431.51 1218.7,431.65 1217.7,431.65 1216.7,431.53 1215.7,431.52 1214.7,431.40 1213.7,431.42 1212.7,431.55 1211.7,431.41 1210.7,431.47 1209.7,431.37 1208.7,431.36 1207.7,431.47 1206.7,431.40 1205.7,431.35 1204.7,431.48 1203.7,431.41 1202.7,431.39 1201.7,431.28 1200.7,431.38 1199.7,431.41 1198.7,431.35 1197.7,431.31 1196.7,431.28 1195.7,431.33 1194.7,431.23 1193.7,431.24 1192.7,431.22 1191.7,431.28 1190.7,431.37 1189.7,431.17 1188.7,431.37 1187.7,431.24 1186.7,431.26 1185.7,431.32 1184.7,431.21 1183.7,431.14 1182.7,431.34 1181.7,431.17 1180.7,431.32 1179.7,431.11 1178.7,431.24 1177.7,431.10 1176.7,431.14 1175.7,431.18 1174.7,431.23 1173.7,431.07 1172.7,431.16 1171.7,431.12 1170.7,431.14 1169.7,431.05 1168.7,431.08 1167.7,431.28 1166.7,431.22 1165.7,431.22 1164.7,431.09 1163.7,431.19 1162.7,431.25 1161.7,431.23 1160.7,431.25 1159.7,431.15 1158.7,431.20 1157.7,431.20 1156.7,431.09 1155.7,431.01 1154.7,430.98 1153.7,431.22 1152.7,431.23 1151.7,431.09 1150.7,431.06 1149.7,430.95 1148.7,431.21 1147.7,431.14 1146.7,431.01 1145.7,431.12 1144.7,430.94 1143.7,431.15 1142.7,431.10 1141.7,430.93 1140.7,431.12 1139.7,431.04 1138.7,431.07 1137.7,430.94 1136.7,431.10 1135.7,430.92 1134.7,431.10 1133.7,430.98 1132.7,430.99 1131.7,431.12 1130.7,431.06 1129.7,431.07 1128.7,431.12 1127.7,430.98 1126.7,430.88 1125.7,430.95 1124.7,430.99 1123.7,430.93 1122.7,430.92 1121.7,430.93 1120.7,430.93 1119.7,431.01 1118.7,430.83 1117.7,430.84 1116.7,431.01 1115.7,431.00 1114.7,430.86 1113.7,430.92 1112.7,430.80 1111.7,431.00 1110.7,430.83 1109.7,431.01 1108.7,430.78 1107.7,430.94 1106.7,430.77 1105.7,430.94 1104.7,430.87 1103.7,430.82 1102.7,430.82 1101.7,430.91 1100.7,430.86 1099.7,430.77 1098.7,430.83 1097.7,430.89 1096.7,430.81 1095.7,430.77 1094.7,430.82 1093.7,430.76 1092.7,430.85 1091.7,430.75 1090.7,430.87 1089.7,430.86 1088.7,430.85 1087.7,430.80 1086.7,430.72 1085.7,430.95 1084.7,430.82 1083.7,430.82 1082.7,430.93 1081.7,430.92 1080.7,430.88 1079.7,430.86 1078.7,430.71 1077.7,430.75 1076.7,430.80 1075.7,430.89 1074.7,430.87 1073.7,430.85 1072.7,430.91 1071.7,430.75 1070.7,430.78 1069.7,430.88 1068.7,430.79 1067.7,430.75 1066.7,430.70 1065.7,430.69 1064.7,430.79 1063.7,430.77 1062.7,430.84 1061.7,430.70 1060.7,430.65 1059.7,430.73 1058.7,430.84 1057.7,430.68 1056.7,430.88 1055.7,430.88 1054.7,430.68 1053.7,430.81 1052.7,430.71 1051.7,430.85 1050.7,430.75 1049.7,430.66 1048.7,430.77 1047.7,430.72 1046.7,430.61 1045.7,430.84 1044.7,430.68 1043.7,430.75 1042.7,430.81 1041.7,430.65 1040.7,430.80 1039.7,430.81 1038.7,430.67 1037.7,430.73 1036.7,430.61 1035.7,430.71 1034.7,430.61 1033.7,430.66 1032.7,430.60 1031.7,430.72 1030.7,430.80 1029.7,430.62 1028.7,430.73 1027.7,430.74 1026.7,430.71 1025.7,430.66 1024.7,430.74 1023.7,430.81 1022.7,430.80 1021.7,430.75 1020.7,430.59 1019.7,430.76 1018.7,430.79 1017.7,430.62 1016.7,430.77 1015.7,430.69 1014.7,430.64 1013.7,430.54 1012.7,430.60 1011.7,430.70 1010.7,430.59 1009.7,430.67 1008.7,430.62 1007.7,430.74 1006.7,430.66 1005.7,430.74 1004.7,430.63 1003.7,430.56 1002.7,430.55 1001.7,430.54 1000.7,430.74 999.7,430.72 998.7,430.62 997.7,430.69 996.7,430.72 995.7,430.69 994.7,430.72 993.7,430.73 992.7,430.67 991.7,430.72 990.7,430.53 989.7,430.61 988.7,430.63 987.7,430.57 986.7,430.56 985.7,430.61 984.7,430.73 983.7,430.69 982.7,430.59 981.7,430.73 980.7,430.53 979.7,430.57 978.7,430.54 977.7,430.67 976.7,430.59 975.7,430.74 974.7,430.69 973.7,430.65 972.7,430.65 971.7,430.60 970.7,430.63 969.7,430.51 968.7,430.56 967.7,430.71 966.7,430.56 965.7,430.51 964.7,430.55 963.7,430.66 962.7,430.52 961.7,430.71 960.7,430.57 959.7,430.67 958.7,430.69 957.7,430.62 956.7,430.52 955.7,430.52 954.7,430.58 953.7,430.65 952.7,430.72 951.7,430.72 950.7,430.55 949.7,430.70 948.7,430.72 947.7,430.52 946.7,430.59 945.7,430.73 944.7,430.75 943.7,430.51 942.7,430.55 941.7,430.67 940.7,430.56 939.7,430.67 938.7,430.57 937.7,430.68 936.7,430.70 935.7,430.74 934.7,430.71 933.7,430.70 932.7,430.64 931.7,430.60 930.7,430.70 929.7,430.74 928.7,430.75 927.7,430.71 926.7,430.70 925.7,430.76 924.7,430.68 923.7,430.65 922.7,430.69 921.7,430.58 920.7,430.60 919.7,430.54 918.7,430.58 917.7,430.70 916.7,430.63 915.7,430.70 914.7,430.69 913.7,430.51 912.7,430.73 911.7,430.54 910.7,430.72 909.7,430.61 908.7,430.61 907.7,430.60 906.7,430.73 905.7,430.63 904.7,430.55 903.7,430.57 902.7,430.68 901.7,430.67 900.7,430.73 899.7,430.52 898.7,430.60 897.7,430.59 896.7,430.75 895.7,430.68 894.7,430.67 893.7,430.75 892.7,430.71 891.7,430.64 890.7,430.71 889.7,430.74 888.7,430.78 887.7,430.76 886.7,430.77 885.7,430.57 884.7,430.77 883.7,430.65 882.7,430.77 881.7,430.72 880.7,430.63 879.7,430.78 878.7,430.75 877.7,430.75 876.7,430.68 875.7,430.59 874.7,430.64 873.7,430.57 872.7,430.62 871.7,430.67 870.7,430.60 869.7,430.68 868.7,430.76 867.7,430.69 866.7,430.82 865.7,430.71 864.7,430.73 863.7,430.78 862.7,430.68 861.7,430.59 860.7,430.77 859.7,430.69 858.7,430.69 857.7,430.85 856.7,430.75 855.7,430.80 854.7,430.72 853.7,430.87 852.7,430.61 851.7,430.63 850.7,430.64 849.7,430.82 848.7,430.64 847.7,430.70 846.7,430.81 845.7,430.74 844.7,430.69 843.7,430.73 842.7,430.88 841.7,430.70 840.7,430.70 839.7,430.79 838.7,430.81 837.7,430.65 836.7,430.87 835.7,430.65 834.7,430.66 833.7,430.91 832.7,430.68 831.7,430.71 830.7,430.88 829.7,430.75 828.7,430.87 827.7,430.89 826.7,430.75 825.7,430.85 824.7,430.77 823.7,430.75 822.7,430.81 821.7,430.74 820.7,430.77 819.7,430.76 818.7,430.77 817.7,430.77 816.7,430.78 815.7,430.81 814.7,430.95 813.7,430.89 812.7,430.88 811.7,430.95 810.7,430.76 809.7,430.86 808.7,430.86 807.7,430.85 806.7,430.89 805.7,430.84 804.7,430.76 803.7,430.89 802.7,430.79 801.7,430.87 800.7,430.87 799.7,430.93 798.7,430.83 797.7,430.82 796.7,430.86 795.7,430.89 794.7,430.95 793.7,430.80 792.7,431.01 791.7,430.79 790.7,430.94 789.7,430.81 788.7,430.93 787.7,430.86 786.7,430.88 785.7,430.88 784.7,431.00 783.7,430.83 782.7,430.84 781.7,430.93 780.7,430.83 779.7,431.00 778.7,430.97 777.7,430.96 776.7,431.00 775.7,431.02 774.7,431.01 773.7,430.87 772.7,430.96 771.7,430.99 770.7,430.94 769.7,430.87 768.7,430.87 767.7,431.14 766.7,431.12 765.7,431.13 764.7,430.94 763.7,431.11 762.7,431.15 761.7,431.13 760.7,430.98 759.7,431.15 758.7,431.03 757.7,430.94 756.7,431.04 755.7,430.95 754.7,431.16 753.7,431.17 752.7,431.08 751.7,430.95 750.7,431.06 749.7,431.03 748.7,431.20 747.7,431.22 746.7,431.15 745.7,431.05 744.7,431.10 743.7,431.04 742.7,431.22 741.7,431.12 740.7,431.01 739.7,431.07 738.7,431.15 737.7,431.17 736.7,431.22 735.7,431.27 734.7,431.04 733.7,431.26 732.7,431.25 731.7,431.05 730.7,431.20 729.7,431.24 728.7,431.09 727.7,431.32 726.7,431.22 725.7,431.30 724.7,431.10 723.7,431.20 722.7,431.13 721.7,431.31 720.7,431.18 719.7,431.24 718.7,431.24 717.7,431.19 716.7,431.17 715.7,431.36 714.7,431.37 713.7,431.26 712.7,431.30 711.7,431.22 710.7,431.17 709.7,431.31 708.7,431.22 707.7,431.26 706.7,431.22 705.7,431.20 704.7,431.17 703.7,431.20 702.7,431.38 701.7,431.29 700.7,431.18 699.7,431.37 698.7,431.34 697.7,431.34 696.7,431.34 695.7,431.22 694.7,431.31 693.7,431.43 692.7,431.29 691.7,431.40 690.7,431.31 689.7,431.23 688.7,431.18 687.7,431.26 686.7,431.35 685.7,431.36 684.7,431.15 683.7,431.18 682.7,431.26 681.7,431.23 680.7,431.26 679.7,431.23 678.7,431.17 677.7,431.23 676.7,431.32 675.7,431.20 674.7,431.13 673.7,431.25 672.7,431.37 671.7,431.31 670.7,431.34 669.7,431.16 668.7,431.11 667.7,431.16 666.7,431.37 665.7,431.19 664.7,431.15 663.7,431.35 662.7,431.29 661.7,431.19 660.7,431.18 659.7,431.26 658.7,431.14 657.7,431.24 656.7,431.14 655.7,431.14 654.7,431.12 653.7,431.08 652.7,431.28 651.7,431.30 650.7,431.27 649.7,431.16 648.7,431.21 647.7,431.21 646.7,431.19 645.7,431.09 644.7,431.11 643.7,431.08 642.7,431.28 641.7,431.23 640.7,431.23 639.7,431.29 638.7,431.05 637.7,431.30 636.7,431.22 635.7,431.29 634.7,431.29 633.7,431.09 632.7,431.07 631.7,431.29 630.7,431.12 629.7,431.18 628.7,431.28 627.7,431.10 626.7,431.10 625.7,431.02 624.7,431.06 623.7,431.05 622.7,431.21 621.7,431.01 620.7,431.19 619.7,431.04 618.7,431.22 617.7,431.01 616.7,431.23 615.7,431.17 614.7,431.14 613.7,431.06 612.7,431.24 611.7,431.01 610.7,431.20 609.7,431.04 608.7,431.02 607.7,431.24 606.7,431.09 605.7,431.06 604.7,430.99 603.7,431.10 602.7,431.20 601.7,431.14 600.7,431.21 599.7,431.01 598.7,430.99 597.7,431.01 596.7,431.24 595.7,431.00 594.7,431.19 593.7,431.03 592.7,431.25 591.7,431.09 590.7,431.09 589.7,431.03 588.7,431.17 587.7,431.10 586.7,431.21 585.7,431.14 584.7,431.28 583.7,431.23 582.7,431.18 581.7,431.28 580.7,431.16 579.7,431.34 578.7,431.34 577.7,431.11 576.7,431.16 575.7,431.23 574.7,431.31 573.7,431.34 572.7,431.32 571.7,431.22 570.7,431.39 569.7,431.36 568.7,431.43 567.7,431.28 566.7,431.18 565.7,431.35 564.7,431.30 563.7,431.28 562.7,431.43 561.7,431.42 560.7,431.46 559.7,431.32 558.7,431.27 557.7,431.37 556.7,431.25 555.7,431.45 554.7,431.26 553.7,431.44 552.7,431.44 551.7,431.51 550.7,431.28 549.7,431.43 548.7,431.53 547.7,431.58 546.7,431.34 545.7,431.51 544.7,431.58 543.7,431.55 542.7,431.35 541.7,431.40 540.7,431.42 539.7,431.52 538.7,431.52 537.7,431.51 536.7,431.58 535.7,431.40 534.7,431.49 533.7,431.68 532.7,431.55 531.7,431.58 530.7,431.61 529.7,431.61 528.7,431.68 527.7,431.69 526.7,431.70 525.7,431.69 524.7,431.55 523.7,431.64 522.7,431.72 521.7,431.56 520.7,431.67 519.7,431.73 518.7,431.57 517.7,431.68 516.7,431.52 515.7,431.69 514.7,431.78 513.7,431.71 512.7,431.62 511.7,431.81 510.7,431.73 509.7,431.59 508.7,431.73 507.7,431.81 506.7,431.82 505.7,431.69 504.7,431.86 503.7,431.86 502.7,431.81 501.7,431.90 500.7,431.86 499.7,431.68 498.7,431.84 497.7,431.78 496.7,431.81 495.7,431.72 494.7,431.90 493.7,431.92 492.7,431.72 491.7,431.73 490.7,431.97 489.7,431.70 488.7,431.96 487.7,431.72 486.7,431.84 485.7,431.84 484.7,431.83 483.7,432.00 482.7,431.95 481.7,431.87 480.7,431.84 479.7,432.03 478.7,431.83 477.7,431.80 476.7,431.94 475.7,432.05 474.7,431.85 473.7,431.96 472.7,431.99 471.7,432.05 470.7,432.04 469.7,432.01 468.7,432.07 467.7,432.12 466.7,432.15 465.7,432.07 464.7,432.10 463.7,432.10 462.7,432.16 461.7,431.99 460.7,432.21 459.7,431.94 458.7,431.96 457.7,432.03 456.7,431.95 455.7,431.98 454.7,432.00 453.7,432.12 452.7,432.05 451.7,432.27 450.7,432.15 449.7,432.20 448.7,432.24 447.7,432.06 446.7,432.30 445.7,432.11 444.7,432.10 443.7,432.08 442.7,432.28 441.7,432.33 440.7,432.34 439.7,432.13 438.7,432.14 437.7,432.08 436.7,432.15 435.7,432.23 434.7,432.32 433.7,432.34 432.7,432.33 431.7,432.05 430.7,432.07 429.7,432.21 428.7,432.31 427.7,432.13 426.7,432.20 425.7,432.22 424.7,432.17 423.7,432.05 422.7,432.00 421.7,432.12 420.7,432.07 419.7,432.23 418.7,432.10 417.7,432.10 416.7,432.24 415.7,432.27 414.7,432.15 413.7,432.06 412.7,432.02 411.7,432.04 410.7,432.16 409.7,432.21 408.7,432.12 407.7,432.06 406.7,432.21 405.7,432.02 404.7,432.17 403.7,432.10 402.7,432.14 401.7,432.11 400.7,432.10 399.7,431.94 398.7,432.19 397.7,432.12 396.7,432.17 395.7,432.06 394.7,432.03 393.7,432.05 392.7,431.92 391.7,432.16 390.7,432.11 389.7,432.10 388.7,432.11 387.7,432.14 386.7,431.85 385.7,431.85 384.7,431.94 383.7,431.96 382.7,432.07 381.7,431.94 380.7,432.18 379.7,432.03 378.7,431.95 377.7,432.12 376.7,432.05 375.7,432.13 374.7,432.09 373.7,432.26 372.7,432.05 371.7,432.26 370.7,432.07 369.7,432.06 368.7,432.09 367.7,432.26 366.7,432.19 365.7,432.32 364.7,432.14 363.7,432.25 362.7,432.31 361.7,432.38 360.7,432.42 359.7,432.26 358.7,432.46 357.7,432.33 356.7,432.49 355.7,432.31 354.7,432.42 353.7,432.45 352.7,432.45 351.7,432.57 350.7,432.52 349.7,432.40 348.7,432.58 347.7,432.40 346.7,432.37 345.7,432.51 344.7,432.61 343.7,432.55 342.7,432.59 341.7,432.53 340.7,432.45 339.7,432.69 338.7,432.77 337.7,432.68 336.7,432.63 335.7,432.70 334.7,432.60 333.7,432.63 332.7,432.87 331.7,432.66 330.7,432.88 329.7,432.78 328.7,432.93 327.7,432.77 326.7,432.76 325.7,433.00 324.7,432.75 323.7,433.00 322.7,433.05 321.7,432.92 320.7,432.97 319.7,433.11 318.7,433.04 317.7,432.89 316.7,432.90 315.7,433.21 314.7,433.06 313.7,433.00 312.7,433.04 311.7,433.22 310.7,433.10 309.7,433.17 308.7,433.03 307.7,433.31 306.7,433.33 305.7,433.06 304.7,433.25 303.7,433.36 302.7,433.23 301.7,433.17 300.7,433.36 299.7,433.46 298.7,433.36 297.7,433.44 296.7,433.28 295.7,433.32 294.7,433.54 293.7,433.57 292.7,433.72 291.7,433.80 290.7,433.64 289.7,433.81 288.7,433.68 287.7,433.97 286.7,433.90 285.7,434.06 284.7,434.07 283.7,434.12 282.7,433.91 281.7,434.23 280.7,433.95 279.7,434.34 278.7,434.03 277.7,434.16 276.7,434.47 275.7,434.45 274.7,434.42 273.7,434.49 272.7,434.35 271.7,434.35 270.7,434.63 269.7,434.79 268.7,434.51 267.7,434.85 266.7,434.56 265.7,434.85 264.7,435.01 263.7,435.06 262.7,434.74 261.7,435.14 260.7,435.17 259.7,434.95 258.7,435.16 257.7,435.19 256.7,435.19 255.7,435.37 254.7,435.36 253.7,435.49 252.7,435.49 251.7,435.42 250.7,435.73 249.7,435.79 248.7,435.84 247.7,435.62 246.7,435.63 245.7,435.87 244.7,436.04 243.7,436.12 242.7,436.13 241.7,436.30 240.7,436.14 239.7,436.47 238.7,436.34 237.7,436.57 236.7,436.23 235.7,436.34 234.7,436.73 233.7,436.50 232.7,436.55 231.7,436.63 230.7,436.70 229.7,436.66 228.7,436.94 227.7,437.16 226.7,437.25 225.7,437.01 224.7,437.16 223.7,437.03 222.7,437.28 221.7,437.26 220.7,437.44 219.7,437.75 218.7,437.53 217.7,437.77 216.7,437.71 215.7,437.57 214.7,438.08 213.7,437.76 212.7,437.92 211.7,437.74 210.7,437.83 209.7,438.15 208.7,437.93 207.7,437.91 206.7,437.96 205.7,438.08 204.7,438.24 203.7,438.57 202.7,438.15 201.7,438.30 200.7,438.38 199.7,438.64 198.7,438.36 197.7,438.34 196.7,438.36 195.7,438.58 194.7,438.96 193.7,438.69 192.7,438.60 191.7,438.81 190.7,438.72 189.7,438.82 188.7,439.15 187.7,439.08 186.7,439.30 185.7,439.05 184.7,439.30 183.7,439.45 182.7,439.12 181.7,439.01 180.7,439.58 179.7,439.50 178.7,439.66 177.7,439.68 176.7,439.61 175.7,439.28 174.7,439.56 173.7,439.44 172.7,439.58 171.7,439.57 170.7,439.82 169.7,439.95 168.7,439.69 167.7,439.64 166.7,439.70 165.7,440.21 164.7,440.05 163.7,439.96 162.7,440.25 161.7,440.07 160.7,440.06 159.7,440.32 158.7,440.11 157.7,440.27 156.7,440.22 155.7,440.84 154.7,440.59 153.7,440.81 152.7,440.99 151.7,440.97 150.7,441.33 149.7,441.11 148.7,441.25 147.7,441.88 146.7,441.70 145.7,441.74 144.7,442.06 143.7,442.31 142.7,442.33 141.7,442.54 140.7,442.91 139.7,443.08 138.7,443.01 137.7,443.39 136.7,443.11 135.7,443.42 134.7,443.79 133.7,443.98 132.7,443.52 131.7,443.94 130.7,443.87 129.7,444.23 128.7,444.42 127.7,444.44 126.7,444.13 125.7,444.79 124.7,444.84 123.7,444.83 122.7,444.82 121.7,444.65 120.7,444.64 119.7,445.17 118.7,445.24 117.7,445.33 116.7,445.48 115.7,445.01 114.7,445.00 113.7,445.12 112.7,445.27 111.7,445.54 110.7,445.37 109.7,445.87 108.7,445.97 107.7,446.13 106.7,445.80 105.7,445.60 104.7,445.75 103.7,446.01 102.7,445.85 101.7,446.02" fill="#b9b9b9"/>
<rect x="388.9" y="348.6" width="30.50" height="83.60" fill="#ffa500" fill-opacity="0.5"/>
<rect x="515.3" y="348.6" width="54.80" height="83.60" fill="#b8b500" fill-opacity="0.93"/>
<rect x="125.2" y="346.6" width="11.90" height="87.60" fill="#000" fill-opacity="0.40" stroke="#000" stroke-opacity="0.85" stroke-width="0.9"/>
<line x1="125.2" y1="371.4" x2="137.1" y2="361.4" stroke="#000" stroke-width="0.9"/>
<line x1="125.2" y1="395.2" x2="137.1" y2="386.0" stroke="#000" stroke-width="0.9"/>
<line x1="125.2" y1="419.3" x2="137.1" y2="409.6" stroke="#000" stroke-width="0.9"/>
<line x1="125.2" y1="443" x2="137.1" y2="433" stroke="#000" stroke-width="0.9"/>
<rect x="1256.4" y="346.6" width="6.50" height="87.60" fill="#000" fill-opacity="0.40" stroke="#000" stroke-opacity="0.85" stroke-width="0.9"/>
<line x1="1256.4" y1="363.6" x2="1262.9" y2="355.7" stroke="#000" stroke-width="0.9"/>
<line x1="1256.4" y1="407.9" x2="1262.9" y2="402.1" stroke="#000" stroke-width="0.9"/>
<line x1="1256.4" y1="431.5" x2="1262.9" y2="425.7" stroke="#000" stroke-width="0.9"/>
<line x1="101.7" y1="423.40" x2="1299.9" y2="423.40" stroke="#000" stroke-opacity="0.55" stroke-width="1.0"/>
<line x1="405.90" y1="348.6" x2="405.90" y2="432.2" stroke="#000" stroke-opacity="0.66" stroke-width="1.15" stroke-dasharray="4.6 2.4"/>
<line x1="697.83" y1="348.6" x2="697.83" y2="432.2" stroke="#000" stroke-opacity="0.66" stroke-width="1.15" stroke-dasharray="4.6 2.4"/>
<line x1="730.98" y1="348.6" x2="730.98" y2="432.2" stroke="#000" stroke-opacity="0.66" stroke-width="1.15" stroke-dasharray="4.6 2.4"/>
<line x1="1171.03" y1="348.6" x2="1171.03" y2="432.2" stroke="#000" stroke-opacity="0.66" stroke-width="1.15" stroke-dasharray="4.6 2.4"/>
<line x1="1197.82" y1="348.6" x2="1197.82" y2="432.2" stroke="#000" stroke-opacity="0.66" stroke-width="1.15" stroke-dasharray="4.6 2.4"/>
<line x1="542.83" y1="348.6" x2="542.83" y2="432.2" stroke="#000" stroke-opacity="0.6" stroke-width="1.0" stroke-dasharray="1.6 1.4"/>
<polyline points="101.7,402.1 103.1,401.4 104.6,414.3 106.0,402.9 107.1,406.4 108.6,397.6 110.7,398.6 112.9,401.4 114.3,406.4 116.1,429.3 117.9,412.1 119.3,402.1 120.7,396.4 122.1,379.3 123.6,392.1 125.0,407.9 126.4,392.1 128.1,372.1 129.3,392.1 130.7,413.6 132.6,395.0 134.3,377.1 135.7,379.3 136.9,397.9 138.6,406.4 140.7,402.9 142.1,406.4 143.6,404.3 145.4,405.7 147.9,411.4 149.3,407.9 150.7,410.0 152.1,406.4 154.0,403.6 155.7,409.3 157.1,413.3 159.3,412.1 160.7,407.9 162.1,386.4 163.6,399.3 165.0,407.9 166.4,406.4 169.3,415.7 171.4,405.0 173.9,394.3 175.3,405.0 176.7,417.1 178.6,405.0 180.0,403.6 182.1,402.1 184.3,413.6 186.4,412.1 189.3,419.3 191.4,409.3 194.3,395.7 195.7,400.7 197.1,406.4 198.6,407.1 201.1,384.3 202.9,393.6 204.0,402.1 205.0,397.9 206.4,410.0 207.9,402.9 209.7,412.1 212.1,403.6 213.6,402.9 215.0,407.9 216.4,400.7 217.9,395.0 218.6,397.1 221.1,386.4 222.6,394.3 223.6,399.3 225.7,412.1 227.1,418.6 229.3,404.3 230.7,399.3 232.1,396.4 234.3,406.4 236.4,416.4 238.6,399.3 240.7,411.4 242.1,407.9 243.6,410.7 245.7,395.0 247.1,396.4 248.6,403.6 250.0,402.1 251.4,408.6 254.3,399.3 256.4,405.0 257.9,404.3 260.0,397.9 262.1,403.6 264.6,392.1 266.4,402.1 268.6,397.9 270.7,407.1 272.9,398.6 275.0,406.4 277.9,417.9 280.7,407.9 283.6,402.9 287.1,401.4 289.3,397.1 291.4,419.3 293.1,411.4 294.6,416.4 297.1,407.1 299.3,419.3 300.0,412.1 301.4,419.3 303.6,412.1 306.4,406.4 309.3,399.3 312.1,413.6 314.3,406.4 317.1,410.0 318.6,405.0 320.7,411.4 322.9,397.9 325.7,416.4 327.1,412.9 328.6,415.0 330.7,402.9 332.9,417.9 334.3,407.9 336.4,407.9 337.9,405.7 340.0,400.7 342.1,411.4 344.3,405.7 346.4,406.4 348.6,395.7 350.7,406.4 352.9,408.6 355.0,414.3 356.0,408.6 357.4,419.3 359.3,407.9 361.4,402.9 363.1,406.4 365.7,398.6 367.9,407.1 369.6,400.0 371.0,401.4 372.9,398.6 374.6,405.0 375.3,416.4 377.1,405.0 378.6,401.4 380.3,407.9 381.7,405.7 382.9,410.0 383.6,405.0 385.0,410.7 386.9,383.6 388.9,401.4 390.7,382.9 392.6,397.1 394.3,381.4 396.9,391.4 398.6,382.1 400.0,377.6 402.1,398.6 405.0,379.3 406.0,393.6 408.1,375.7 410.0,384.3 411.9,375.7 414.3,390.7 416.0,393.6 416.9,391.4 418.9,407.1 420.3,393.6 422.9,392.9 424.0,392.1 425.7,399.3 427.1,412.9 429.3,377.9 430.7,389.3 432.1,379.3 434.3,382.1 436.4,396.4 438.3,386.4 440.0,387.9 442.1,395.7 444.3,391.4 446.4,392.1 448.6,382.1 449.7,380.7 451.7,376.7 453.6,382.9 455.7,387.9 457.1,385.7 458.6,390.7 460.0,388.6 462.1,394.3 463.9,375.0 465.7,388.6 467.1,382.9 470.0,381.4 472.1,383.6 475.0,389.3 477.9,395.7 480.3,386.4 482.1,390.0 484.0,389.3 485.7,387.9 487.4,394.3 489.3,387.9 491.1,386.4 493.1,374.3 494.6,385.0 495.7,399.3 497.4,390.7 499.3,392.1 500.0,390.7 501.7,392.9 503.6,385.0 505.7,385.7 507.4,391.4 509.3,386.4 511.4,385.7 513.6,387.9 514.3,387.1 516.4,400.0 518.6,387.1 520.7,386.4 522.9,380.0 524.3,387.9 526.0,401.4 528.1,391.4 530.0,400.7 533.1,411.4 535.7,402.1 538.3,392.1 540.3,385.7 541.4,385.7 543.1,377.6 544.6,382.1 546.0,393.6 547.9,402.1 549.3,399.3 550.7,404.3 552.9,387.9 555.0,386.4 556.9,390.7 559.3,395.7 561.4,390.0 563.6,390.7 565.7,385.0 567.4,390.7 569.3,398.6 571.4,389.3 573.6,394.3 575.7,397.1 578.6,393.6 581.1,398.6 582.9,386.4 584.6,377.1 586.4,375.0 588.1,380.7 589.7,387.9 591.4,389.3 592.9,382.1 594.3,371.4 595.4,370.7 597.1,375.0 600.0,385.0 602.9,376.4 604.3,377.9 606.0,383.6 608.3,369.3 610.0,379.3 612.9,375.7 615.0,377.1 617.1,377.9 619.3,392.1 621.1,390.0 622.9,394.3 625.0,397.9 627.1,387.9 628.6,383.6 631.4,381.4 633.6,377.9 635.7,386.4 637.9,392.9 640.7,385.7 642.9,379.3 644.3,376.4 646.0,367.6 647.9,379.3 649.7,387.1 652.1,384.3 654.3,378.6 655.7,377.1 657.1,377.9 658.9,373.6 660.7,373.6 662.6,365.7 664.3,376.4 665.7,384.3 666.7,383.6 668.6,395.0 670.7,385.7 672.1,381.4 673.6,370.7 675.4,367.1 677.9,372.9 679.7,366.4 682.1,372.9 683.6,372.9 686.0,361.4 687.9,372.9 690.0,369.3 693.1,360.7 695.7,367.1 697.9,360.7 699.3,366.4 700.0,366.4 701.7,362.1 703.1,363.6 705.4,352.4 706.9,360.7 708.3,372.1 710.0,377.9 712.1,382.9 714.3,375.7 716.0,369.3 717.4,359.3 719.3,366.4 720.7,364.3 722.6,362.1 725.0,366.4 727.1,359.3 728.6,360.0 730.7,357.1 732.1,360.0 733.6,367.1 735.7,362.9 737.4,363.6 738.9,361.9 741.4,369.3 743.6,365.7 745.7,362.9 747.9,362.4 750.0,365.0 752.1,367.1 754.3,368.6 756.4,360.0 757.9,361.4 759.7,359.3 761.7,362.9 763.6,360.7 765.7,357.1 767.1,360.7 769.6,356.4 771.4,360.4 773.1,357.9 775.0,362.9 776.0,367.9 777.4,362.1 779.3,370.7 780.7,368.6 782.6,365.0 784.3,365.7 786.4,355.7 788.3,362.1 789.7,360.7 791.4,376.4 793.1,377.1 795.0,365.0 796.4,369.3 798.6,364.3 800.0,368.6 801.7,372.9 803.6,370.0 805.7,366.4 807.1,367.9 808.9,365.0 810.7,367.9 811.7,370.7 813.6,375.0 815.4,370.0 817.1,370.7 819.3,356.4 820.3,366.4 822.1,362.9 823.6,362.1 825.0,359.3 826.4,370.0 827.4,369.3 828.9,373.6 830.7,370.7 832.1,371.4 833.6,368.6 835.0,370.7 836.9,368.6 839.3,371.4 841.4,375.7 842.9,376.1 845.0,370.0 847.1,375.0 849.3,370.7 852.1,379.3 854.3,372.9 856.4,375.7 859.7,380.0 861.4,378.6 862.9,379.3 865.0,370.7 867.1,373.6 869.3,374.3 871.4,370.7 873.1,375.7 875.0,370.7 877.1,368.6 879.3,365.7 881.4,370.0 883.6,373.6 885.0,372.9 887.4,381.4 889.3,372.1 891.4,374.3 893.1,376.4 895.0,370.7 896.4,372.9 898.6,367.9 900.0,368.6 901.7,367.1 903.6,375.0 905.4,384.3 907.1,375.0 908.6,368.6 910.3,381.4 912.1,377.1 913.6,380.7 915.0,375.7 916.9,376.4 918.3,375.0 920.7,378.6 922.9,382.9 925.0,376.4 927.9,370.0 930.0,369.3 931.7,370.7 933.6,369.3 935.4,375.7 936.9,375.0 938.6,378.6 940.0,377.9 941.7,382.1 943.6,377.9 945.4,372.1 946.9,372.9 948.9,367.9 950.7,375.7 952.1,378.6 954.3,372.9 956.4,375.7 958.1,367.1 959.3,375.7 960.7,382.1 962.6,379.3 964.0,379.3 965.4,369.3 967.1,373.6 968.9,379.3 970.7,371.4 972.9,375.7 974.3,375.0 976.4,377.9 978.3,377.1 980.0,382.1 981.4,379.3 982.9,383.6 984.6,378.6 986.4,377.1 988.6,382.9 990.3,383.6 992.6,387.9 994.3,382.9 995.7,383.6 997.1,387.1 998.6,376.4 1000.0,377.9 1001.7,380.0 1003.1,378.6 1005.0,381.4 1006.4,385.0 1007.9,390.7 1009.7,387.1 1012.1,388.6 1014.3,382.1 1016.0,386.4 1017.4,385.7 1019.7,375.0 1021.4,379.3 1022.9,378.6 1025.0,383.6 1027.9,387.1 1030.0,385.7 1031.4,385.0 1033.6,380.0 1035.0,382.1 1037.1,380.7 1038.9,379.3 1040.7,382.1 1042.9,379.3 1045.0,383.6 1047.1,387.9 1050.0,390.7 1052.1,390.0 1054.3,383.6 1056.9,376.4 1058.6,387.9 1060.7,389.3 1062.6,392.9 1064.3,387.9 1065.7,385.7 1067.4,387.9 1070.0,382.9 1071.4,390.7 1072.9,382.9 1075.0,390.7 1077.1,385.0 1079.3,387.1 1081.4,381.4 1083.6,387.9 1085.7,396.4 1087.9,403.6 1090.0,390.0 1091.4,402.1 1093.6,393.6 1095.0,400.0 1097.1,395.0 1099.3,382.9 1100.0,383.6 1101.4,387.9 1103.6,385.7 1105.7,386.4 1107.4,392.1 1109.3,399.3 1111.1,395.0 1112.9,385.0 1114.3,375.7 1115.7,380.0 1117.9,374.3 1119.3,380.0 1120.7,386.4 1122.1,380.0 1124.3,383.6 1126.0,378.6 1127.9,371.4 1129.3,375.7 1130.3,369.3 1132.1,378.6 1134.3,373.6 1136.4,376.4 1137.9,375.7 1140.0,378.6 1142.1,384.3 1144.0,389.3 1145.7,394.3 1147.9,385.7 1150.0,375.7 1152.1,374.3 1154.3,375.7 1156.0,370.7 1157.4,370.0 1159.3,374.3 1160.7,378.6 1162.9,377.9 1165.0,379.3 1167.1,372.9 1168.6,370.0 1170.0,375.7 1171.4,365.0 1173.1,370.7 1174.3,374.3 1175.7,370.0 1177.9,378.6 1179.3,386.4 1180.3,388.6 1182.9,372.9 1184.3,375.7 1186.4,375.0 1188.6,375.0 1191.4,370.7 1192.9,373.6 1194.6,365.7 1196.0,367.1 1198.3,362.1 1199.7,371.4 1200.7,375.7 1202.9,375.0 1204.3,383.6 1205.7,388.6 1207.9,378.6 1210.0,369.3 1212.1,370.0 1214.0,380.0 1215.4,375.7 1217.9,383.6 1219.3,378.6 1220.7,385.7 1222.9,373.6 1225.0,378.6 1226.4,377.1 1227.9,382.9 1229.3,383.6 1231.1,370.0 1232.9,370.7 1234.6,366.4 1236.4,374.3 1237.9,371.4 1239.3,379.3 1241.1,386.4 1242.9,380.7 1244.6,375.7 1245.7,378.6 1247.1,374.3 1248.9,380.7 1250.7,373.6 1252.9,365.7 1254.3,368.6 1256.0,383.6 1257.4,375.7 1259.7,386.4 1261.4,370.7 1263.6,372.9 1265.7,371.4 1267.4,375.7 1268.9,381.4 1270.7,374.3 1272.1,370.0 1273.6,374.3 1275.0,372.9 1276.9,369.3 1278.9,378.6 1280.7,375.0 1282.6,377.1 1284.3,375.7 1286.0,377.1 1287.9,376.4 1290.7,380.7 1292.1,377.1 1293.6,370.0 1295.4,372.1 1297.1,373.6 1298.6,375.0 1300.0,374.3" fill="none" stroke="#0000ff" stroke-width="1.15" stroke-linejoin="round"/>
</g>
<rect x="101.7" y="348.6" width="1198.20" height="83.60" fill="none" stroke="#222" stroke-width="0.9"/>
<text class="s" x="104.60" y="446.80" font-size="9.7" text-anchor="middle">3500</text>
<text class="s" x="163.47" y="446.80" font-size="9.7" text-anchor="middle">3600</text>
<text class="s" x="222.34" y="446.80" font-size="9.7" text-anchor="middle">3700</text>
<text class="s" x="281.21" y="446.80" font-size="9.7" text-anchor="middle">3800</text>
<text class="s" x="340.08" y="446.80" font-size="9.7" text-anchor="middle">3900</text>
<text class="s" x="398.95" y="446.80" font-size="9.7" text-anchor="middle">4000</text>
<text class="s" x="457.82" y="446.80" font-size="9.7" text-anchor="middle">4100</text>
<text class="s" x="516.69" y="446.80" font-size="9.7" text-anchor="middle">4200</text>
<text class="s" x="575.56" y="446.80" font-size="9.7" text-anchor="middle">4300</text>
<text class="s" x="634.43" y="446.80" font-size="9.7" text-anchor="middle">4400</text>
<text class="s" x="693.30" y="446.80" font-size="9.7" text-anchor="middle">4500</text>
<text class="s" x="752.17" y="446.80" font-size="9.7" text-anchor="middle">4600</text>
<text class="s" x="811.04" y="446.80" font-size="9.7" text-anchor="middle">4700</text>
<text class="s" x="869.91" y="446.80" font-size="9.7" text-anchor="middle">4800</text>
<text class="s" x="928.78" y="446.80" font-size="9.7" text-anchor="middle">4900</text>
<text class="s" x="987.65" y="446.80" font-size="9.7" text-anchor="middle">5000</text>
<text class="s" x="1046.52" y="446.80" font-size="9.7" text-anchor="middle">5100</text>
<text class="s" x="1105.39" y="446.80" font-size="9.7" text-anchor="middle">5200</text>
<text class="s" x="1164.26" y="446.80" font-size="9.7" text-anchor="middle">5300</text>
<text class="s" x="1223.13" y="446.80" font-size="9.7" text-anchor="middle">5400</text>
<text class="s" x="1282.00" y="446.80" font-size="9.7" text-anchor="middle">5500</text>
<text class="s" x="95.20" y="427.00" font-size="9.7" text-anchor="end">0</text>
<text class="s" x="95.20" y="405.05" font-size="9.7" text-anchor="end">5</text>
<text class="s" x="95.20" y="383.10" font-size="9.7" text-anchor="end">10</text>
<text class="s" x="95.20" y="361.15" font-size="9.7" text-anchor="end">15</text>
<path d="M104.60 432.2v3.4M163.47 432.2v3.4M222.34 432.2v3.4M281.21 432.2v3.4M340.08 432.2v3.4M398.95 432.2v3.4M457.82 432.2v3.4M516.69 432.2v3.4M575.56 432.2v3.4M634.43 432.2v3.4M693.30 432.2v3.4M752.17 432.2v3.4M811.04 432.2v3.4M869.91 432.2v3.4M928.78 432.2v3.4M987.65 432.2v3.4M1046.52 432.2v3.4M1105.39 432.2v3.4M1164.26 432.2v3.4M1223.13 432.2v3.4M1282.00 432.2v3.4M101.7 423.40h-3.4M101.7 401.45h-3.4M101.7 379.50h-3.4M101.7 357.55h-3.4" stroke="#222" stroke-width="0.8" fill="none"/>
<text class="s" x="104.6" y="346.0" font-size="9.7">e<tspan font-size="6.8" dy="-3.8">−17</tspan><tspan dy="3.8">x2</tspan><tspan class="i">Å</tspan></text>
<text class="s" transform="translate(116.05,349.00) rotate(90)" font-size="10.0" text-anchor="end" fill="#ff00ff">CIII {</text>
<text class="s" transform="translate(168.45,349.00) rotate(90)" font-size="10.0" text-anchor="end" fill="#ff0000">OVI  {</text>
<text class="s" transform="translate(188.95,349.00) rotate(90)" font-size="10.0" text-anchor="end" fill="#800080">HeII {</text>
<text class="s" transform="translate(295.35,349.00) rotate(90)" font-size="10.0" text-anchor="end" fill="#8a2be2">SiIV {</text>
<text class="s" transform="translate(388.45,349.00) rotate(90)" font-size="10.0" text-anchor="end" fill="#87ceeb" fill-opacity="0.75">OII  {</text>
<text class="s" transform="translate(401.65,349.00) rotate(90)" font-size="10.0" text-anchor="end" fill="#ffa500">CIV  {</text>
<text class="s" transform="translate(409.75,349.00) rotate(90)" font-size="10.0" text-anchor="end" fill="#87ceeb" fill-opacity="0.75">OII  {</text>
<text class="s" transform="translate(591.75,349.00) rotate(90)" font-size="10.0" text-anchor="end" fill="#ff0000">NV   {</text>
<text class="s" transform="translate(637.65,349.00) rotate(90)" font-size="10.0" text-anchor="end" fill="#ff0000">SiII {</text>
<text class="s" transform="translate(686.35,349.00) rotate(90)" font-size="10.0" text-anchor="end" fill="#8a2be2">HeII {</text>
<text class="s" transform="translate(773.45,341.00) rotate(90)" font-size="10.0" text-anchor="end" fill="#87ceeb" fill-opacity="0.75">Hγ</text><text class="s" transform="translate(773.45,349.00) rotate(90)" font-size="10.0" text-anchor="end" fill="#87ceeb" fill-opacity="0.75">{</text>
<text class="s" transform="translate(797.95,341.00) rotate(90)" font-size="10.0" text-anchor="end" fill="#87ceeb" fill-opacity="0.75">Hγ</text><text class="s" transform="translate(797.95,349.00) rotate(90)" font-size="10.0" text-anchor="end" fill="#87ceeb" fill-opacity="0.75">{</text>
<text class="s" transform="translate(913.85,349.00) rotate(90)" font-size="10.0" text-anchor="end" fill="#ff0000">SiIV {</text>
<text class="s" transform="translate(949.15,341.00) rotate(90)" font-size="10.0" text-anchor="end" fill="#008000">Hγ</text><text class="s" transform="translate(949.15,349.00) rotate(90)" font-size="10.0" text-anchor="end" fill="#008000">{</text>
<text class="s" transform="translate(1083.35,349.00) rotate(90)" font-size="10.0" text-anchor="end" fill="#800080">CII  {</text>
<text class="s" transform="translate(1101.35,341.00) rotate(90)" font-size="10.0" text-anchor="end" fill="#87ceeb" fill-opacity="0.75">Hβ</text><text class="s" transform="translate(1101.35,349.00) rotate(90)" font-size="10.0" text-anchor="end" fill="#87ceeb" fill-opacity="0.75">{</text>
<text class="s" transform="translate(1118.95,349.00) rotate(90)" font-size="10.0" text-anchor="end" fill="#8a2be2">CIII {</text>
<text class="s" transform="translate(1129.65,341.00) rotate(90)" font-size="10.0" text-anchor="end" fill="#87ceeb" fill-opacity="0.75">Hβ</text><text class="s" transform="translate(1129.65,349.00) rotate(90)" font-size="10.0" text-anchor="end" fill="#87ceeb" fill-opacity="0.75">{</text>
<text class="s" transform="translate(1163.65,349.00) rotate(90)" font-size="10.0" text-anchor="end" fill="#87ceeb" fill-opacity="0.75">OIII {</text>
<text class="s" transform="translate(1190.95,349.00) rotate(90)" font-size="10.0" text-anchor="end" fill="#87ceeb" fill-opacity="0.75">OIII {</text>
<text class="s" transform="translate(1225.55,349.00) rotate(90)" font-size="10.0" text-anchor="end" fill="#ff0000">CIV  {</text>
<text class="s" transform="translate(170.65,307.00) rotate(90)" font-size="10.0" text-anchor="end" fill="#ffa500" fill-opacity="0.8">SiIV {</text>
<text class="s" transform="translate(948.65,307.00) rotate(90)" font-size="10.0" text-anchor="end" fill="#ffa500" fill-opacity="0.8">CIII {</text>
<text class="s" transform="translate(1193.85,307.00) rotate(90)" font-size="10.0" text-anchor="end" fill="#87ceeb" fill-opacity="0.8">OIII {</text>
<text class="s" transform="translate(1222.15,307.00) rotate(90)" font-size="10.0" text-anchor="end" fill="#87ceeb" fill-opacity="0.8">OIII {</text>
<rect x="479.9" y="449.8" width="17.1" height="6.6" fill="#ff0000"/>
<text class="s" x="502.90" y="455.90" font-size="8.0" text-anchor="start">Lyα</text>
<rect x="534.1" y="449.8" width="17.1" height="6.6" fill="#008000"/>
<text class="s" x="556.40" y="455.90" font-size="8.0" text-anchor="start">OII</text>
<rect x="586.7" y="449.8" width="17.1" height="6.6" fill="#8a2be2"/>
<text class="s" x="609.70" y="455.90" font-size="8.0" text-anchor="start">CIV</text>
<rect x="641.9" y="449.8" width="17.1" height="6.6" fill="#800080"/>
<text class="s" x="664.50" y="455.90" font-size="8.0" text-anchor="start">CIII</text>
<rect x="693.5" y="449.8" width="17.1" height="6.6" fill="#ff00ff"/>
<text class="s" x="716.50" y="455.90" font-size="8.0" text-anchor="start">MgII</text>
<rect x="749.3" y="449.8" width="17.1" height="6.6" fill="#ffa500"/>
<text class="s" x="772.30" y="455.90" font-size="8.0" text-anchor="start">HeII</text>
<rect x="804.2" y="449.8" width="17.1" height="6.6" fill="#87ceeb"/>
<text class="s" x="826.60" y="455.90" font-size="8.0" text-anchor="start">(K)CaII</text>
<rect x="869.3" y="449.8" width="17.1" height="6.6" fill="#87ceeb"/>
<text class="s" x="892.30" y="455.90" font-size="8.0" text-anchor="start">(H)CaII</text>
<defs><radialGradient id="ggal" cx="0.5" cy="0.5" r="0.5"><stop offset="0" stop-color="#000"/><stop offset="0.373" stop-color="#000"/><stop offset="0.40" stop-color="#2e2e2e"/><stop offset="0.43" stop-color="#858585"/><stop offset="0.47" stop-color="#bcbcbc"/><stop offset="0.535" stop-color="#d8d8d8"/><stop offset="0.64" stop-color="#e8e8e8"/><stop offset="0.8" stop-color="#f3f3f3"/><stop offset="1" stop-color="#fcfcfc"/></radialGradient><filter id="bl6" x="-0.5" y="-0.5" width="2" height="2"><feGaussianBlur stdDeviation="6"/></filter><filter id="bl3" x="-0.5" y="-0.5" width="2" height="2"><feGaussianBlur stdDeviation="3"/></filter><filter id="bl9" x="-0.5" y="-0.5" width="2" height="2"><feGaussianBlur stdDeviation="9"/></filter><filter id="pix" filterUnits="userSpaceOnUse" x="0" y="0" width="156" height="156"><feFlood x="1" y="1" height="1" width="1"/><feComposite width="3" height="3"/><feTile result="a"/><feComposite in="SourceGraphic" in2="a" operator="in"/><feMorphology operator="dilate" radius="1"/></filter></defs>
<clipPath id="cm0"><rect x="70.0" y="532.8" width="148.5" height="147.80"/></clipPath>
<g clip-path="url(#cm0)"><svg x="67.0" y="529.8" width="156" height="156">
<g filter="url(#pix)">
<rect x="0" y="0" width="156" height="156" fill="#fcfcfc"/>
<ellipse cx="22.95" cy="58.60" rx="93.2" ry="75" fill="url(#ggal)"/>
</g></svg></g>
<circle cx="158.2" cy="559.4" r="12.0" fill="none" stroke="#555" stroke-opacity="0.85" stroke-width="1.0"/>
<circle cx="134.7" cy="563.3" r="12.0" fill="none" stroke="#555" stroke-opacity="0.85" stroke-width="1.0"/>
<circle cx="111.2" cy="567.0" r="12.0" fill="none" stroke="#555" stroke-opacity="0.85" stroke-width="1.0"/>
<circle cx="173.8" cy="577.0" r="12.0" fill="none" stroke="#555" stroke-opacity="0.85" stroke-width="1.0"/>
<circle cx="150.6" cy="580.9" r="12.0" fill="none" stroke="#555" stroke-opacity="0.85" stroke-width="1.0"/>
<circle cx="126.8" cy="585.9" r="12.0" fill="none" stroke="#555" stroke-opacity="0.85" stroke-width="1.0"/>
<circle cx="102.3" cy="590.1" r="12.0" fill="none" stroke="#555" stroke-opacity="0.85" stroke-width="1.0"/>
<circle cx="190.1" cy="595.2" r="12.0" fill="none" stroke="#555" stroke-opacity="0.85" stroke-width="1.0"/>
<circle cx="117.0" cy="608.5" r="12.0" fill="none" stroke="#555" stroke-opacity="0.85" stroke-width="1.0"/>
<circle cx="93.0" cy="612.6" r="12.0" fill="none" stroke="#555" stroke-opacity="0.85" stroke-width="1.0"/>
<circle cx="180.5" cy="618.7" r="12.0" fill="none" stroke="#555" stroke-opacity="0.85" stroke-width="1.0"/>
<circle cx="109.5" cy="631.6" r="12.0" fill="none" stroke="#555" stroke-opacity="0.85" stroke-width="1.0"/>
<circle cx="173.8" cy="641.8" r="12.0" fill="none" stroke="#555" stroke-opacity="0.85" stroke-width="1.0"/>
<circle cx="149.5" cy="645.5" r="12.0" fill="none" stroke="#555" stroke-opacity="0.85" stroke-width="1.0"/>
<circle cx="126.3" cy="649.7" r="12.0" fill="none" stroke="#555" stroke-opacity="0.85" stroke-width="1.0"/>
<circle cx="166.2" cy="600.2" r="12.0" fill="none" stroke="#ffa500" stroke-width="1.4"/>
<circle cx="141.1" cy="604.4" r="12.0" fill="none" stroke="#0000ff" stroke-width="1.4"/>
<circle cx="158.2" cy="622.5" r="12.0" fill="none" stroke="#00ff00" stroke-width="1.4"/>
<circle cx="133.8" cy="627.9" r="12.0" fill="none" stroke="#ff0000" stroke-width="1.4"/>
<rect x="94.90" y="557.44" width="98.70" height="98.52" fill="none" stroke="#ff0000" stroke-width="1.5"/>
<text class="s" x="144.25" y="545.80" font-size="10.8" text-anchor="middle" fill="#ff0000">N</text>
<text class="s" x="76.85" y="610.40" font-size="10.8" text-anchor="start" fill="#ff0000">E</text>
<text class="s" x="144.30" y="610.40" font-size="10.8" text-anchor="middle" fill="#ff0000">+</text>
<rect x="70.0" y="532.8" width="148.5" height="147.80" fill="none" stroke="#222" stroke-width="0.9"/>
<text class="s" x="78.45" y="695.50" font-size="10.8" text-anchor="middle">−4</text>
<text class="s" x="63.00" y="676.38" font-size="10.8" text-anchor="end">−4</text>
<text class="s" x="111.35" y="695.50" font-size="10.8" text-anchor="middle">−2</text>
<text class="s" x="63.00" y="643.54" font-size="10.8" text-anchor="end">−2</text>
<text class="s" x="144.25" y="695.50" font-size="10.8" text-anchor="middle">0</text>
<text class="s" x="63.00" y="610.70" font-size="10.8" text-anchor="end">0</text>
<text class="s" x="177.15" y="695.50" font-size="10.8" text-anchor="middle">2</text>
<text class="s" x="63.00" y="577.86" font-size="10.8" text-anchor="end">2</text>
<text class="s" x="210.05" y="695.50" font-size="10.8" text-anchor="middle">4</text>
<text class="s" x="63.00" y="545.02" font-size="10.8" text-anchor="end">4</text>
<path d="M78.45 680.6v3.5M70.0 672.38h-3.5M111.35 680.6v3.5M70.0 639.54h-3.5M144.25 680.6v3.5M70.0 606.70h-3.5M177.15 680.6v3.5M70.0 573.86h-3.5M210.05 680.6v3.5M70.0 541.02h-3.5" stroke="#222" stroke-width="0.8" fill="none"/>
<text class="s" x="144.25" y="525.50" font-size="13" text-anchor="middle">Fiber Positions</text>
<text class="s" x="144.25" y="706.40" font-size="10.8" text-anchor="middle">arcsecs</text>
<clipPath id="cm1"><rect x="255.3" y="532.8" width="148.5" height="147.80"/></clipPath>
<g clip-path="url(#cm1)"><svg x="252.3" y="529.8" width="156" height="156"><g filter="url(#pix)"><g transform="translate(-252.30,-529.80)">
<rect x="252.3" y="529.8" width="154.5" height="153.80" fill="#3e4787"/>
<ellipse cx="357.5" cy="571.7" rx="16" ry="13" fill="#2a788e" fill-opacity="0.9" filter="url(#bl6)"/>
<ellipse cx="394.4" cy="644.5" rx="9" ry="15" fill="#2a788e" fill-opacity="0.8" filter="url(#bl6)"/>
<ellipse cx="300.4" cy="667.4" rx="14" ry="9" fill="#2a788e" fill-opacity="0.8" filter="url(#bl6)"/>
<ellipse cx="328.9" cy="606.1" rx="9" ry="9" fill="#2e6f8e" fill-opacity="0.8" filter="url(#bl3)"/>
<ellipse cx="360.8" cy="676.6" rx="44" ry="10" fill="#46085c" fill-opacity="0.95" filter="url(#bl6)"/>
<ellipse cx="384.3" cy="669.0" rx="30" ry="8" fill="#472d7b" fill-opacity="0.8" filter="url(#bl6)"/>
<ellipse cx="313.8" cy="645.5" rx="16" ry="9" fill="#472d7b" fill-opacity="0.9" filter="url(#bl6)"/>
<ellipse cx="337.3" cy="580.0" rx="6" ry="8" fill="#453781" fill-opacity="0.8" filter="url(#bl3)"/>
<ellipse cx="305.4" cy="538.1" rx="20" ry="6" fill="#453781" fill-opacity="0.7" filter="url(#bl6)"/>
<ellipse cx="399.4" cy="570.0" rx="8" ry="40" fill="#453781" fill-opacity="0.75" filter="url(#bl6)"/>
<polygon points="262.6,561.6 298.7,559.1 300.4,572.5 303.7,573.3 303.7,578.4 307.9,579.2 307.9,586.8 300.4,608.6 290.3,609.4 288.6,606.9 276.9,606.9 275.2,601.9 268.5,601.0 266.8,596.0 261.8,595.2 260.1,578.4" fill="#2c728e" stroke="#2c728e" stroke-width="34" stroke-linejoin="round" filter="url(#bl9)" fill-opacity="0.8" stroke-opacity="0.8"/>
<polygon points="262.6,561.6 298.7,559.1 300.4,572.5 303.7,573.3 303.7,578.4 307.9,579.2 307.9,586.8 300.4,608.6 290.3,609.4 288.6,606.9 276.9,606.9 275.2,601.9 268.5,601.0 266.8,596.0 261.8,595.2 260.1,578.4" fill="#21918c" stroke="#21918c" stroke-width="22" stroke-linejoin="round" filter="url(#bl6)" fill-opacity="0.95" stroke-opacity="0.95"/>
<polygon points="262.6,561.6 298.7,559.1 300.4,572.5 303.7,573.3 303.7,578.4 307.9,579.2 307.9,586.8 300.4,608.6 290.3,609.4 288.6,606.9 276.9,606.9 275.2,601.9 268.5,601.0 266.8,596.0 261.8,595.2 260.1,578.4" fill="#4ac16d" stroke="#4ac16d" stroke-width="7" stroke-linejoin="round" filter="url(#bl3)"/>
<polygon points="262.6,561.6 298.7,559.1 300.4,572.5 303.7,573.3 303.7,578.4 307.9,579.2 307.9,586.8 300.4,608.6 290.3,609.4 288.6,606.9 276.9,606.9 275.2,601.9 268.5,601.0 266.8,596.0 261.8,595.2 260.1,578.4" fill="#fde725" stroke="#b5de2b" stroke-width="1.2"/>
</g></g></svg></g>
<rect x="280.20" y="557.44" width="98.70" height="98.52" fill="none" stroke="#ff0000" stroke-width="1.3"/>
<text class="s" x="329.55" y="545.80" font-size="10.8" text-anchor="middle" fill="#ff0000">N</text>
<text class="s" x="262.15" y="610.40" font-size="10.8" text-anchor="start" fill="#ff0000">E</text>
<path d="M329.55 570V599.3M329.55 614.3V643.6M292.95 606.7H322.15M337.15 606.7H367.15" stroke="#ff0000" stroke-width="1.2" fill="none"/>
<rect x="255.3" y="532.8" width="148.5" height="147.80" fill="none" stroke="#222" stroke-width="0.9"/>
<text class="s" x="263.75" y="695.50" font-size="10.8" text-anchor="middle">−4</text>
<text class="s" x="248.30" y="676.38" font-size="10.8" text-anchor="end">−4</text>
<text class="s" x="296.65" y="695.50" font-size="10.8" text-anchor="middle">−2</text>
<text class="s" x="248.30" y="643.54" font-size="10.8" text-anchor="end">−2</text>
<text class="s" x="329.55" y="695.50" font-size="10.8" text-anchor="middle">0</text>
<text class="s" x="248.30" y="610.70" font-size="10.8" text-anchor="end">0</text>
<text class="s" x="362.45" y="695.50" font-size="10.8" text-anchor="middle">2</text>
<text class="s" x="248.30" y="577.86" font-size="10.8" text-anchor="end">2</text>
<text class="s" x="395.35" y="695.50" font-size="10.8" text-anchor="middle">4</text>
<text class="s" x="248.30" y="545.02" font-size="10.8" text-anchor="end">4</text>
<path d="M263.75 680.6v3.5M255.3 672.38h-3.5M296.65 680.6v3.5M255.3 639.54h-3.5M329.55 680.6v3.5M255.3 606.70h-3.5M362.45 680.6v3.5M255.3 573.86h-3.5M395.35 680.6v3.5M255.3 541.02h-3.5" stroke="#222" stroke-width="0.8" fill="none"/>
<text class="s" x="329.55" y="525.50" font-size="13" text-anchor="middle">Lineflux Map</text>
<text class="s" x="329.55" y="706.40" font-size="10.8" text-anchor="middle">s/b: 1.29 +/- 0.082</text>
<clipPath id="cm2"><rect x="440.4" y="532.8" width="148.5" height="147.80"/></clipPath>
<g clip-path="url(#cm2)"><svg x="437.4" y="529.8" width="156" height="156">
<g filter="url(#pix)">
<rect x="0" y="0" width="156" height="156" fill="#fcfcfc"/>
<ellipse cx="22.95" cy="58.60" rx="93.2" ry="75" fill="url(#ggal)"/>
</g></svg></g>
<g clip-path="url(#cm2)"><circle cx="465.45" cy="588.5" r="39.2" fill="none" stroke="#ffd700" stroke-width="1.2"/></g>
<rect x="465.30" y="557.44" width="98.70" height="98.52" fill="none" stroke="#ff0000" stroke-width="1.0"/>
<text class="s" x="514.65" y="545.80" font-size="10.8" text-anchor="middle" fill="#ff0000">N</text>
<text class="s" x="447.25" y="610.40" font-size="10.8" text-anchor="start" fill="#ff0000">E</text>
<path d="M514.65 570V599.3M514.65 614.3V643.6M478.05 606.7H507.25M522.25 606.7H552.25" stroke="#ff0000" stroke-width="1.2" fill="none"/>
<rect x="440.4" y="532.8" width="148.5" height="147.80" fill="none" stroke="#222" stroke-width="0.9"/>
<text class="s" x="448.85" y="695.50" font-size="10.8" text-anchor="middle">−4</text>
<text class="s" x="433.40" y="676.38" font-size="10.8" text-anchor="end">−4</text>
<text class="s" x="481.75" y="695.50" font-size="10.8" text-anchor="middle">−2</text>
<text class="s" x="433.40" y="643.54" font-size="10.8" text-anchor="end">−2</text>
<text class="s" x="514.65" y="695.50" font-size="10.8" text-anchor="middle">0</text>
<text class="s" x="433.40" y="610.70" font-size="10.8" text-anchor="end">0</text>
<text class="s" x="547.55" y="695.50" font-size="10.8" text-anchor="middle">2</text>
<text class="s" x="433.40" y="577.86" font-size="10.8" text-anchor="end">2</text>
<text class="s" x="580.45" y="695.50" font-size="10.8" text-anchor="middle">4</text>
<text class="s" x="433.40" y="545.02" font-size="10.8" text-anchor="end">4</text>
<path d="M448.85 680.6v3.5M440.4 672.38h-3.5M481.75 680.6v3.5M440.4 639.54h-3.5M514.65 680.6v3.5M440.4 606.70h-3.5M547.55 680.6v3.5M440.4 573.86h-3.5M580.45 680.6v3.5M440.4 541.02h-3.5" stroke="#222" stroke-width="0.8" fill="none"/>
<text class="s" x="514.65" y="525.50" font-size="13" text-anchor="middle">HSC(26.2) r</text>
<text class="s" x="514.65" y="706.40" font-size="10.8" text-anchor="middle">m:14.9  re:2.3"  s:3.1"</text>
<text class="s" x="514.65" y="718.90" font-size="10.8" text-anchor="middle">EWr: 0, PLAE: 0.087</text>
</svg>
</body></html>
